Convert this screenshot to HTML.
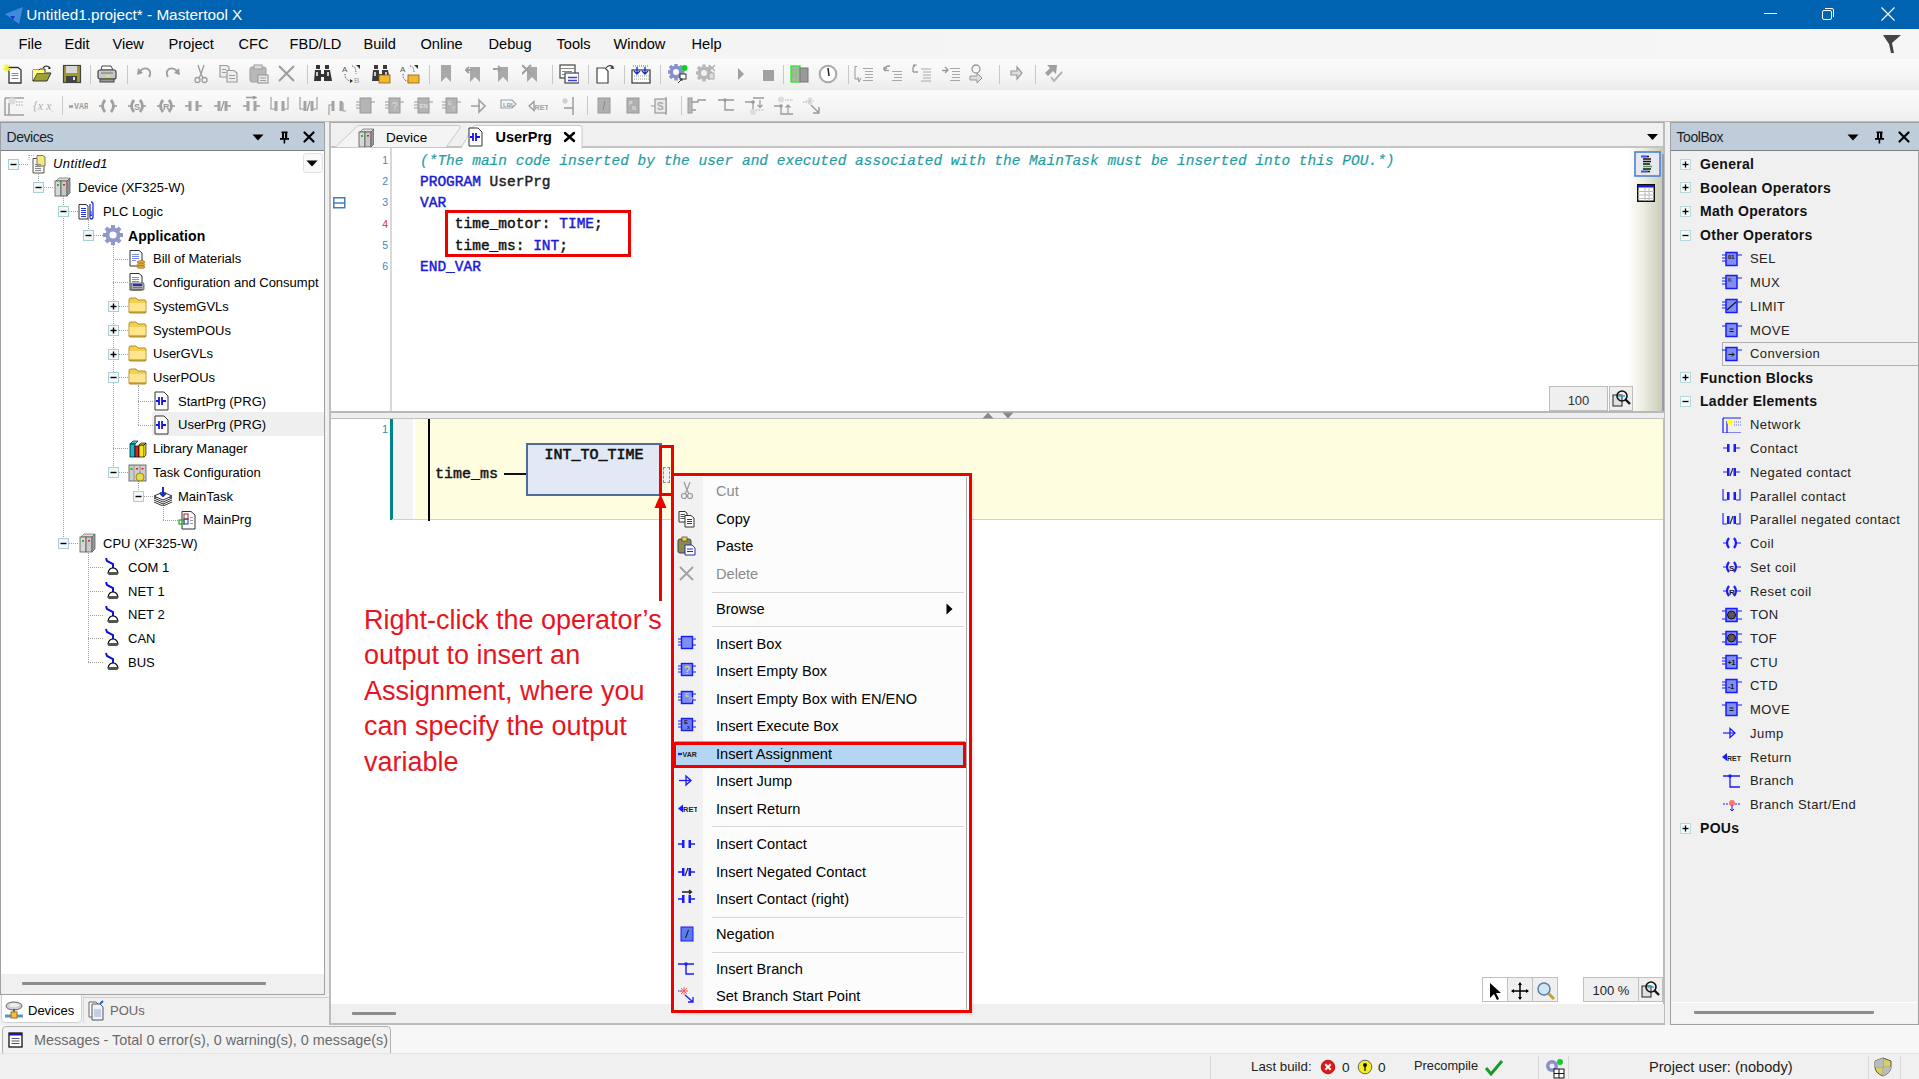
<!DOCTYPE html><html><head><meta charset="utf-8"><style>
*{margin:0;padding:0;box-sizing:border-box}
html,body{width:1919px;height:1079px;overflow:hidden;background:#f0f0f0;font-family:"Liberation Sans",sans-serif}
div{position:absolute}
.t{white-space:pre;line-height:1}
.mono{font-family:"Liberation Mono",monospace;white-space:pre;line-height:1}
</style></head><body><div style="left:0px;top:0px;width:1919px;height:29px;background:#0063b1"></div><svg style="position:absolute;left:2px;top:3px;" width="22" height="22" viewBox="0 0 22 22"><path d="M3 11 L21 4 L17 21 Z" fill="#4a90e2" opacity=".85"/><path d="M8 13 L13 13 L11 17 Z" fill="#1040c0"/></svg><div class="t" style="left:26.3px;top:6.8px;font-size:15.3px;color:#fff">Untitled1.project* - Mastertool X</div><div style="left:1764px;top:13px;width:13px;height:1px;background:#fff"></div><svg style="position:absolute;left:1820px;top:6px;" width="16" height="16" viewBox="0 0 16 16"><rect x="2.5" y="4.5" width="9" height="9" rx="1.5" fill="none" stroke="#fff"/><path d="M5 2.5 H12 a1.5 1.5 0 0 1 1.5 1.5 V11" fill="none" stroke="#fff"/></svg><svg style="position:absolute;left:1880px;top:6px;" width="16" height="16" viewBox="0 0 16 16"><path d="M1.5 1.5 L14.5 14.5 M14.5 1.5 L1.5 14.5" stroke="#fff" stroke-width="1.2"/></svg><div style="left:0px;top:29px;width:1919px;height:30px;background:linear-gradient(90deg,#f0f0f0,#f4f4f4 35%,#f6f6f6);border-top:1px solid #fdfdfd"></div><div class="t" style="left:18.5px;top:36.6px;font-size:14.6px;color:#000">File</div><div class="t" style="left:64.5px;top:36.6px;font-size:14.6px;color:#000">Edit</div><div class="t" style="left:112.5px;top:36.6px;font-size:14.6px;color:#000">View</div><div class="t" style="left:168.5px;top:36.6px;font-size:14.6px;color:#000">Project</div><div class="t" style="left:238.5px;top:36.6px;font-size:14.6px;color:#000">CFC</div><div class="t" style="left:289.5px;top:36.6px;font-size:14.6px;color:#000">FBD/LD</div><div class="t" style="left:363.5px;top:36.6px;font-size:14.6px;color:#000">Build</div><div class="t" style="left:420.5px;top:36.6px;font-size:14.6px;color:#000">Online</div><div class="t" style="left:488.5px;top:36.6px;font-size:14.6px;color:#000">Debug</div><div class="t" style="left:556.5px;top:36.6px;font-size:14.6px;color:#000">Tools</div><div class="t" style="left:613.5px;top:36.6px;font-size:14.6px;color:#000">Window</div><div class="t" style="left:691.5px;top:36.6px;font-size:14.6px;color:#000">Help</div><svg style="position:absolute;left:1882px;top:34px;" width="20" height="20" viewBox="0 0 20 20"><path d="M1 1 L19 1 L10 9 L12 19 L9 19 L7 10 Z" fill="#444"/></svg><div style="left:0px;top:59px;width:1919px;height:31px;background:linear-gradient(#fbfbfb,#f5f5f5 55%,#ececec)"></div><div style="left:0px;top:90px;width:1919px;height:31px;background:linear-gradient(#fbfbfb,#f5f5f5 55%,#eeeeee)"></div><div style="left:0px;top:121px;width:1919px;height:1px;background:#bdbdbd"></div><div style="left:0px;top:122px;width:325px;height:873px;background:#fff;border:1px solid #a0a0a0;border-top-color:#9a9a9a"></div><div style="left:1px;top:123px;width:323px;height:28px;background:#bfcddb;border-bottom:1px solid #7c8086"></div><div class="t" style="left:6.5px;top:130.2px;font-size:14px;letter-spacing:-.45px;color:#1e1e1e">Devices</div><svg style="position:absolute;left:252px;top:134px;" width="12" height="7" viewBox="0 0 12 7"><path d="M0.5 0.5 L11.5 0.5 L6 6.5 Z" fill="#000"/></svg><svg style="position:absolute;left:279px;top:131px;" width="11" height="13" viewBox="0 0 11 13"><rect x="2.5" y="0.5" width="6" height="1.6" fill="#000"/><rect x="3" y="1" width="2" height="6" fill="#000"/><rect x="6" y="1" width="2.2" height="6" fill="#000"/><rect x="1" y="7" width="9" height="1.8" fill="#000"/><rect x="4.6" y="8.5" width="1.6" height="4" fill="#000"/></svg><svg style="position:absolute;left:303px;top:131px;" width="12" height="12" viewBox="0 0 12 12"><path d="M1.5 1.5 L10.5 10.5 M10.5 1.5 L1.5 10.5" stroke="#000" stroke-width="2.2" stroke-linecap="round"/></svg><div style="left:1px;top:974px;width:323px;height:20px;background:#f0f0f0"></div><div style="left:22px;top:982px;width:244px;height:3px;background:#8c8c8c;border-radius:1px"></div><div style="left:303px;top:153px;width:20px;height:20px;background:#fafafa;border:1px solid #e2e2e2;border-radius:3px"></div><svg style="position:absolute;left:306px;top:160px;" width="12" height="7" viewBox="0 0 12 7"><path d="M0.5 0.5 L11.5 0.5 L6 6.5 Z" fill="#000"/></svg><div style="left:152px;top:412px;width:172px;height:24px;background:#efefef"></div><div style="left:38px;top:172px;width:1px;height:15px;border-left:1px dotted #a0a0a0"></div><div style="left:19px;top:164px;width:9px;height:1px;border-top:1px dotted #a0a0a0"></div><div style="left:44px;top:187px;width:9px;height:1px;border-top:1px dotted #a0a0a0"></div><div style="left:63px;top:195px;width:1px;height:348px;border-left:1px dotted #a0a0a0"></div><div style="left:69px;top:211px;width:9px;height:1px;border-top:1px dotted #a0a0a0"></div><div style="left:88px;top:219px;width:1px;height:16px;border-left:1px dotted #a0a0a0"></div><div style="left:94px;top:235px;width:9px;height:1px;border-top:1px dotted #a0a0a0"></div><div style="left:113px;top:243px;width:1px;height:229px;border-left:1px dotted #a0a0a0"></div><div style="left:113px;top:259px;width:15px;height:1px;border-top:1px dotted #a0a0a0"></div><div style="left:113px;top:282px;width:15px;height:1px;border-top:1px dotted #a0a0a0"></div><div style="left:119px;top:306px;width:9px;height:1px;border-top:1px dotted #a0a0a0"></div><div style="left:119px;top:330px;width:9px;height:1px;border-top:1px dotted #a0a0a0"></div><div style="left:119px;top:354px;width:9px;height:1px;border-top:1px dotted #a0a0a0"></div><div style="left:119px;top:377px;width:9px;height:1px;border-top:1px dotted #a0a0a0"></div><div style="left:138px;top:385px;width:1px;height:40px;border-left:1px dotted #a0a0a0"></div><div style="left:138px;top:401px;width:15px;height:1px;border-top:1px dotted #a0a0a0"></div><div style="left:138px;top:425px;width:15px;height:1px;border-top:1px dotted #a0a0a0"></div><div style="left:113px;top:448px;width:15px;height:1px;border-top:1px dotted #a0a0a0"></div><div style="left:119px;top:472px;width:9px;height:1px;border-top:1px dotted #a0a0a0"></div><div style="left:138px;top:480px;width:1px;height:16px;border-left:1px dotted #a0a0a0"></div><div style="left:144px;top:496px;width:9px;height:1px;border-top:1px dotted #a0a0a0"></div><div style="left:163px;top:504px;width:1px;height:16px;border-left:1px dotted #a0a0a0"></div><div style="left:163px;top:520px;width:15px;height:1px;border-top:1px dotted #a0a0a0"></div><div style="left:69px;top:543px;width:9px;height:1px;border-top:1px dotted #a0a0a0"></div><div style="left:88px;top:551px;width:1px;height:111px;border-left:1px dotted #a0a0a0"></div><div style="left:88px;top:567px;width:15px;height:1px;border-top:1px dotted #a0a0a0"></div><div style="left:88px;top:591px;width:15px;height:1px;border-top:1px dotted #a0a0a0"></div><div style="left:88px;top:615px;width:15px;height:1px;border-top:1px dotted #a0a0a0"></div><div style="left:88px;top:638px;width:15px;height:1px;border-top:1px dotted #a0a0a0"></div><div style="left:88px;top:662px;width:15px;height:1px;border-top:1px dotted #a0a0a0"></div><svg style="position:absolute;left:8px;top:159px;" width="11" height="11" viewBox="0 0 11 11"><rect x=".5" y=".5" width="10" height="10" fill="#f4f7f8" stroke="#a9cfd4"/><path d="M2.5 5.5 H8.5" stroke="#000" stroke-width="1.4"/></svg><svg style="position:absolute;left:28px;top:154px;" width="20" height="20" viewBox="0 0 20 20"><path d="M5 4.5 H13 L16 7 V19 H5 Z" fill="#f8f8f0" stroke="#555"/><path d="M9 1.5 H15 L17 3 V12 H9 Z" fill="#f7e87a" stroke="#777"/><path d="M1 1.5 H6 M1 1 V6" stroke="#999" stroke-dasharray="1 1"/><path d="M7 10.5 H13 M7 12.5 H13 M7 14.5 H13 M7 16.5 H13" stroke="#888"/></svg><div class="t" style="left:53px;top:157.434px;font-size:13px;color:#000;font-style:italic;letter-spacing:.4px">Untitled1</div><svg style="position:absolute;left:33px;top:182px;" width="11" height="11" viewBox="0 0 11 11"><rect x=".5" y=".5" width="10" height="10" fill="#f4f7f8" stroke="#a9cfd4"/><path d="M2.5 5.5 H8.5" stroke="#000" stroke-width="1.4"/></svg><svg style="position:absolute;left:53px;top:177px;" width="20" height="20" viewBox="0 0 20 20"><path d="M3 4 L6 1 H17 L14 4 Z" fill="#ddd" stroke="#666" stroke-width=".7"/><rect x="2" y="4" width="6" height="15" fill="#d8d8d8" stroke="#555" stroke-width=".8"/><rect x="8" y="4" width="6" height="15" fill="#c8c8c8" stroke="#555" stroke-width=".8"/><path d="M14 4 L17 1 V16 L14 19 Z" fill="#999" stroke="#555" stroke-width=".7"/><rect x="4" y="7" width="2" height="2" fill="#1c1"/><rect x="10" y="7" width="2" height="1.5" fill="#d22"/></svg><div class="t" style="left:78px;top:181.164px;font-size:13px;color:#000;">Device (XF325-W)</div><svg style="position:absolute;left:58px;top:206px;" width="11" height="11" viewBox="0 0 11 11"><rect x=".5" y=".5" width="10" height="10" fill="#f4f7f8" stroke="#a9cfd4"/><path d="M2.5 5.5 H8.5" stroke="#000" stroke-width="1.4"/></svg><svg style="position:absolute;left:78px;top:201px;" width="20" height="20" viewBox="0 0 20 20"><path d="M1 3.5 H8 L10 5 V18 H1 Z" fill="#fff" stroke="#333"/><path d="M3 7.5 H8 M3 9.5 H8 M3 11.5 H8 M3 13.5 H8 M3 15.5 H8" stroke="#2233dd"/><path d="M13 1 C15 1 15 2 15 3 V16 C15 17 14 18 13 18 C12 18 12 17 12 16 V3" fill="none" stroke="#2233dd" stroke-width="1.3"/><path d="M13 10 V15 M11.5 13.5 L13 15 L14.5 13.5" stroke="#2233dd" fill="none"/></svg><div class="t" style="left:103px;top:204.894px;font-size:13px;color:#000;">PLC Logic</div><svg style="position:absolute;left:83px;top:230px;" width="11" height="11" viewBox="0 0 11 11"><rect x=".5" y=".5" width="10" height="10" fill="#f4f7f8" stroke="#a9cfd4"/><path d="M2.5 5.5 H8.5" stroke="#000" stroke-width="1.4"/></svg><svg style="position:absolute;left:103px;top:225px;" width="20" height="20" viewBox="0 0 20 20"><g transform="translate(10 10)"><circle r="7.5" fill="#9098cc"/><circle r="3.6" fill="#fff"/><rect x="-2" y="-10" width="4" height="4" fill="#9098cc" transform="rotate(0)"/><rect x="-2" y="-10" width="4" height="4" fill="#9098cc" transform="rotate(45)"/><rect x="-2" y="-10" width="4" height="4" fill="#9098cc" transform="rotate(90)"/><rect x="-2" y="-10" width="4" height="4" fill="#9098cc" transform="rotate(135)"/><rect x="-2" y="-10" width="4" height="4" fill="#9098cc" transform="rotate(180)"/><rect x="-2" y="-10" width="4" height="4" fill="#9098cc" transform="rotate(225)"/><rect x="-2" y="-10" width="4" height="4" fill="#9098cc" transform="rotate(270)"/><rect x="-2" y="-10" width="4" height="4" fill="#9098cc" transform="rotate(315)"/></g></svg><div class="t" style="left:128px;top:228.624px;font-size:13px;color:#000;font-weight:bold;letter-spacing:.1px;font-size:14px">Application</div><svg style="position:absolute;left:128px;top:249px;" width="20" height="20" viewBox="0 0 20 20"><path d="M2 1.5 H11 L14 4 V17 H2 Z" fill="#fff" stroke="#333"/><path d="M4 5.5 H11 M4 7.5 H11 M4 9.5 H11 M4 11.5 H8" stroke="#7a8ae8"/><ellipse cx="13" cy="13" rx="4" ry="1.5" fill="#d9a83a" stroke="#8a6a20" stroke-width=".5"/><ellipse cx="13" cy="15.5" rx="4" ry="1.5" fill="#d9a83a" stroke="#8a6a20" stroke-width=".5"/><ellipse cx="13" cy="18" rx="4" ry="1.5" fill="#d9a83a" stroke="#8a6a20" stroke-width=".5"/></svg><div class="t" style="left:153px;top:252.354px;font-size:13px;color:#000;">Bill of Materials</div><svg style="position:absolute;left:128px;top:272px;" width="20" height="20" viewBox="0 0 20 20"><path d="M2 1.5 H11 L14 4 V18 H2 Z" fill="#fff" stroke="#333"/><path d="M4 5.5 H11 M4 7.5 H11 M4 9.5 H11" stroke="#7a8ae8"/><rect x="3" y="11" width="13" height="7" rx="1" fill="#aaa" stroke="#444" stroke-width=".7"/><rect x="5" y="12" width="9" height="2" fill="#2233aa"/><path d="M5 15.5 H14 M5 17.5 H14" stroke="#555" stroke-width=".6"/></svg><div class="t" style="left:153px;top:276.084px;font-size:13px;color:#000;">Configuration and Consumpt</div><svg style="position:absolute;left:108px;top:301px;" width="11" height="11" viewBox="0 0 11 11"><rect x=".5" y=".5" width="10" height="10" fill="#f4f7f8" stroke="#a9cfd4"/><path d="M2.5 5.5 H8.5" stroke="#000" stroke-width="1.4"/><path d="M5.5 2.5 V8.5" stroke="#000" stroke-width="1.4"/></svg><svg style="position:absolute;left:128px;top:296px;" width="20" height="20" viewBox="0 0 20 20"><path d="M1 4 Q1 2 3 2 H8 L10 4 H17 Q18 4 18 6 V16 Q18 17 17 17 H2 Q1 17 1 16 Z" fill="#f3cf52" stroke="#a8811a" stroke-width=".9"/><path d="M1.5 7 H17.5 V16 H1.5 Z" fill="#ffe68c"/><path d="M1 16 H18" stroke="#a8811a"/></svg><div class="t" style="left:153px;top:299.81399999999996px;font-size:13px;color:#000;">SystemGVLs</div><svg style="position:absolute;left:108px;top:325px;" width="11" height="11" viewBox="0 0 11 11"><rect x=".5" y=".5" width="10" height="10" fill="#f4f7f8" stroke="#a9cfd4"/><path d="M2.5 5.5 H8.5" stroke="#000" stroke-width="1.4"/><path d="M5.5 2.5 V8.5" stroke="#000" stroke-width="1.4"/></svg><svg style="position:absolute;left:128px;top:320px;" width="20" height="20" viewBox="0 0 20 20"><path d="M1 4 Q1 2 3 2 H8 L10 4 H17 Q18 4 18 6 V16 Q18 17 17 17 H2 Q1 17 1 16 Z" fill="#f3cf52" stroke="#a8811a" stroke-width=".9"/><path d="M1.5 7 H17.5 V16 H1.5 Z" fill="#ffe68c"/><path d="M1 16 H18" stroke="#a8811a"/></svg><div class="t" style="left:153px;top:323.544px;font-size:13px;color:#000;">SystemPOUs</div><svg style="position:absolute;left:108px;top:349px;" width="11" height="11" viewBox="0 0 11 11"><rect x=".5" y=".5" width="10" height="10" fill="#f4f7f8" stroke="#a9cfd4"/><path d="M2.5 5.5 H8.5" stroke="#000" stroke-width="1.4"/><path d="M5.5 2.5 V8.5" stroke="#000" stroke-width="1.4"/></svg><svg style="position:absolute;left:128px;top:344px;" width="20" height="20" viewBox="0 0 20 20"><path d="M1 4 Q1 2 3 2 H8 L10 4 H17 Q18 4 18 6 V16 Q18 17 17 17 H2 Q1 17 1 16 Z" fill="#f3cf52" stroke="#a8811a" stroke-width=".9"/><path d="M1.5 7 H17.5 V16 H1.5 Z" fill="#ffe68c"/><path d="M1 16 H18" stroke="#a8811a"/></svg><div class="t" style="left:153px;top:347.27399999999994px;font-size:13px;color:#000;">UserGVLs</div><svg style="position:absolute;left:108px;top:372px;" width="11" height="11" viewBox="0 0 11 11"><rect x=".5" y=".5" width="10" height="10" fill="#f4f7f8" stroke="#a9cfd4"/><path d="M2.5 5.5 H8.5" stroke="#000" stroke-width="1.4"/></svg><svg style="position:absolute;left:128px;top:367px;" width="20" height="20" viewBox="0 0 20 20"><path d="M1 4 Q1 2 3 2 H8 L10 4 H17 Q18 4 18 6 V16 Q18 17 17 17 H2 Q1 17 1 16 Z" fill="#f3cf52" stroke="#a8811a" stroke-width=".9"/><path d="M1.5 7 H17.5 V16 H1.5 Z" fill="#ffe68c"/><path d="M1 16 H18" stroke="#a8811a"/></svg><div class="t" style="left:153px;top:371.00399999999996px;font-size:13px;color:#000;">UserPOUs</div><svg style="position:absolute;left:153px;top:391px;" width="20" height="20" viewBox="0 0 20 20"><path d="M2 1 H11 L15 5 V19 H2 Z" fill="#fff" stroke="#333"/><path d="M3 10 H6 M6 6 V14 M9 6 V14 M9 10 H13" stroke="#1515ee" stroke-width="1.8"/></svg><div class="t" style="left:178px;top:394.734px;font-size:13px;color:#000;">StartPrg (PRG)</div><svg style="position:absolute;left:153px;top:415px;" width="20" height="20" viewBox="0 0 20 20"><path d="M2 1 H11 L15 5 V19 H2 Z" fill="#fff" stroke="#333"/><path d="M3 10 H6 M6 6 V14 M9 6 V14 M9 10 H13" stroke="#1515ee" stroke-width="1.8"/></svg><div class="t" style="left:178px;top:418.464px;font-size:13px;color:#000;">UserPrg (PRG)</div><svg style="position:absolute;left:128px;top:438px;" width="20" height="20" viewBox="0 0 20 20"><path d="M2 6 L5 3 H10 L7 6 Z" fill="#2ad4e8" stroke="#000" stroke-width=".6"/><rect x="2" y="6" width="5" height="13" fill="#18b7cc" stroke="#000" stroke-width=".7"/><rect x="7" y="8" width="4" height="11" fill="#e02020" stroke="#000" stroke-width=".7"/><rect x="11" y="7" width="5" height="12" fill="#f4e424" stroke="#000" stroke-width=".7"/><path d="M11 7 L13 5 H18 L16 7 Z M16 7 L18 5 V17 L16 19" fill="#d8c818" stroke="#000" stroke-width=".6"/></svg><div class="t" style="left:153px;top:442.19399999999996px;font-size:13px;color:#000;">Library Manager</div><svg style="position:absolute;left:108px;top:467px;" width="11" height="11" viewBox="0 0 11 11"><rect x=".5" y=".5" width="10" height="10" fill="#f4f7f8" stroke="#a9cfd4"/><path d="M2.5 5.5 H8.5" stroke="#000" stroke-width="1.4"/></svg><svg style="position:absolute;left:128px;top:462px;" width="20" height="20" viewBox="0 0 20 20"><rect x="1" y="3" width="17" height="16" fill="#ccc" stroke="#555" stroke-width=".8"/><path d="M6 3 V19 M12 3 V19" stroke="#777" stroke-width=".6"/><rect x="2.5" y="6" width="2" height="2" fill="#1c1"/><rect x="8" y="6" width="2" height="1.5" fill="#d22"/><rect x="13.5" y="6" width="2" height="1.5" fill="#d22"/><g transform="translate(12 15)"><circle r="4" fill="#f2e020" stroke="#665500" stroke-width=".6"/><circle r="1.5" fill="#ccc"/></g></svg><div class="t" style="left:153px;top:465.924px;font-size:13px;color:#000;">Task Configuration</div><svg style="position:absolute;left:133px;top:491px;" width="11" height="11" viewBox="0 0 11 11"><rect x=".5" y=".5" width="10" height="10" fill="#f4f7f8" stroke="#a9cfd4"/><path d="M2.5 5.5 H8.5" stroke="#000" stroke-width="1.4"/></svg><svg style="position:absolute;left:153px;top:486px;" width="20" height="20" viewBox="0 0 20 20"><path d="M1 12 L10 8 L19 12 L10 16 Z" fill="#fff" stroke="#333"/><path d="M1 14 L10 18 L19 14" fill="none" stroke="#333"/><path d="M1 16 L10 20 L19 16" fill="none" stroke="#333"/><path d="M1 10 L10 6 L19 10 L10 14 Z" fill="#fff" stroke="#333"/><path d="M10 1 V10 M7 7 L10 10 L13 7" stroke="#1530c0" stroke-width="2" fill="none"/></svg><div class="t" style="left:178px;top:489.654px;font-size:13px;color:#000;">MainTask</div><svg style="position:absolute;left:178px;top:510px;" width="20" height="20" viewBox="0 0 20 20"><path d="M4 1.5 H13 L17 5 V19 H4 Z" fill="#fff" stroke="#333"/><rect x="6" y="4" width="4" height="5" fill="none" stroke="#c03030" stroke-width="1.1"/><rect x="6" y="9" width="4" height="5" fill="none" stroke="#3040c0" stroke-width="1.1"/><rect x="1" y="10" width="5" height="4" fill="none" stroke="#20a020" stroke-width="1.2"/><path d="M12 7.5 H15 M12 10.5 H15 M12 13.5 H15" stroke="#999"/></svg><div class="t" style="left:203px;top:513.384px;font-size:13px;color:#000;">MainPrg</div><svg style="position:absolute;left:58px;top:538px;" width="11" height="11" viewBox="0 0 11 11"><rect x=".5" y=".5" width="10" height="10" fill="#f4f7f8" stroke="#a9cfd4"/><path d="M2.5 5.5 H8.5" stroke="#000" stroke-width="1.4"/></svg><svg style="position:absolute;left:78px;top:533px;" width="20" height="20" viewBox="0 0 20 20"><path d="M3 4 L6 1 H17 L14 4 Z" fill="#ddd" stroke="#666" stroke-width=".7"/><rect x="2" y="4" width="6" height="15" fill="#d8d8d8" stroke="#555" stroke-width=".8"/><rect x="8" y="4" width="6" height="15" fill="#c8c8c8" stroke="#555" stroke-width=".8"/><path d="M14 4 L17 1 V16 L14 19 Z" fill="#999" stroke="#555" stroke-width=".7"/><rect x="4" y="7" width="2" height="2" fill="#1c1"/><rect x="10" y="7" width="2" height="1.5" fill="#d22"/></svg><div class="t" style="left:103px;top:537.114px;font-size:13px;color:#000;">CPU (XF325-W)</div><svg style="position:absolute;left:103px;top:557px;" width="20" height="20" viewBox="0 0 20 20"><path d="M3 1 L4 4 L10 7 L10 11" stroke="#1010e0" stroke-width="2" fill="none"/><path d="M5 16 Q6 11 10 11 Q14 11 15 16 Z" fill="#fff" stroke="#000" stroke-width="1.2"/><rect x="5" y="15" width="10" height="3" rx="1" fill="#555"/></svg><div class="t" style="left:128px;top:560.844px;font-size:13px;color:#000;">COM 1</div><svg style="position:absolute;left:103px;top:581px;" width="20" height="20" viewBox="0 0 20 20"><path d="M3 1 L4 4 L10 7 L10 11" stroke="#1010e0" stroke-width="2" fill="none"/><path d="M5 16 Q6 11 10 11 Q14 11 15 16 Z" fill="#fff" stroke="#000" stroke-width="1.2"/><rect x="5" y="15" width="10" height="3" rx="1" fill="#555"/></svg><div class="t" style="left:128px;top:584.574px;font-size:13px;color:#000;">NET 1</div><svg style="position:absolute;left:103px;top:605px;" width="20" height="20" viewBox="0 0 20 20"><path d="M3 1 L4 4 L10 7 L10 11" stroke="#1010e0" stroke-width="2" fill="none"/><path d="M5 16 Q6 11 10 11 Q14 11 15 16 Z" fill="#fff" stroke="#000" stroke-width="1.2"/><rect x="5" y="15" width="10" height="3" rx="1" fill="#555"/></svg><div class="t" style="left:128px;top:608.304px;font-size:13px;color:#000;">NET 2</div><svg style="position:absolute;left:103px;top:628px;" width="20" height="20" viewBox="0 0 20 20"><path d="M3 1 L4 4 L10 7 L10 11" stroke="#1010e0" stroke-width="2" fill="none"/><path d="M5 16 Q6 11 10 11 Q14 11 15 16 Z" fill="#fff" stroke="#000" stroke-width="1.2"/><rect x="5" y="15" width="10" height="3" rx="1" fill="#555"/></svg><div class="t" style="left:128px;top:632.034px;font-size:13px;color:#000;">CAN</div><svg style="position:absolute;left:103px;top:652px;" width="20" height="20" viewBox="0 0 20 20"><path d="M3 1 L4 4 L10 7 L10 11" stroke="#1010e0" stroke-width="2" fill="none"/><path d="M5 16 Q6 11 10 11 Q14 11 15 16 Z" fill="#fff" stroke="#000" stroke-width="1.2"/><rect x="5" y="15" width="10" height="3" rx="1" fill="#555"/></svg><div class="t" style="left:128px;top:655.764px;font-size:13px;color:#000;">BUS</div><div style="left:324px;top:151px;width:1px;height:823px;background:#a0a0a0"></div><div style="left:0px;top:995px;width:330px;height:30px;background:#f0f0f0"></div><div style="left:83px;top:997px;width:247px;height:1px;background:#d0d0d0"></div><div style="left:1px;top:995px;width:81px;height:28px;background:#fff;border:1px solid #d0d0d0;border-top:none;border-radius:0 0 5px 5px"></div><svg style="position:absolute;left:4px;top:1000px;" width="20" height="20" viewBox="0 0 20 20"><ellipse cx="10" cy="6" rx="8" ry="4" fill="#cfcfcf" stroke="#666"/><ellipse cx="10" cy="5" rx="5" ry="2" fill="#eee"/><path d="M10 9 V14" stroke="#444" stroke-width="1.5"/><path d="M1 16 H19" stroke="#5599cc" stroke-width="3"/><rect x="7" y="12" width="6" height="6" fill="#f2c040" stroke="#a07010"/></svg><div class="t" style="left:28px;top:1004px;font-size:13px;color:#000">Devices</div><div style="left:83px;top:996px;width:1px;height:27px;background:#d8d8d8"></div><svg style="position:absolute;left:86px;top:999px;" width="20" height="22" viewBox="0 0 20 22"><path d="M3 3 H10 L13 6 V18 H3 Z" fill="#fff" stroke="#666"/><path d="M6 5 H14 L17 8 V21 H6 Z" fill="#eef4ff" stroke="#555"/><path d="M14 5 L17 2" stroke="#2266cc" stroke-width="2"/><path d="M8 11 H15 M8 13 H15 M8 15 H15 M8 17 H15" stroke="#9ac"/></svg><div class="t" style="left:110px;top:1004px;font-size:13px;color:#666">POUs</div><div style="left:329px;top:122px;width:1336px;height:903px;background:#fff;border:2px solid #bcbcbc;border-top:1px solid #a8a8a8"></div><div style="left:331px;top:123px;width:1332px;height:24px;background:#f0f0f0"></div><div style="left:331px;top:146px;width:1332px;height:2px;background:#c4c4c4"></div><svg style="position:absolute;left:1647px;top:134px;" width="11" height="6" viewBox="0 0 11 6"><path d="M0 0 H11 L5.5 6 Z" fill="#000"/></svg><svg style="position:absolute;left:334px;top:124px;" width="130" height="24" viewBox="0 0 130 24"><path d="M1 23.5 L24 1.5 H124 Q127 1.5 126 4 L112 23.5 Z" fill="#f4f4f4" stroke="#c8c8c8"/></svg><svg style="position:absolute;left:357px;top:128px;" width="17" height="19" viewBox="0 0 17 19"><path d="M3 4 L6 1 H17 L14 4 Z" fill="#ddd" stroke="#666" stroke-width=".7"/><rect x="2" y="4" width="6" height="15" fill="#d8d8d8" stroke="#555" stroke-width=".8"/><rect x="8" y="4" width="6" height="15" fill="#c8c8c8" stroke="#555" stroke-width=".8"/><path d="M14 4 L17 1 V16 L14 19 Z" fill="#999" stroke="#555" stroke-width=".7"/><rect x="4" y="7" width="2" height="2" fill="#1c1"/><rect x="10" y="7" width="2" height="1.5" fill="#d22"/></svg><div class="t" style="left:386px;top:131px;font-size:13.5px;color:#000">Device</div><svg style="position:absolute;left:460px;top:124px;" width="124" height="25" viewBox="0 0 124 25"><path d="M1 24 L13 3 Q14 1.5 16 1.5 H119 Q122 1.5 122 4 V24 Z" fill="#fff" stroke="#c8c8c8"/><path d="M2 24 H121" stroke="#fff" stroke-width="2"/></svg><svg style="position:absolute;left:467px;top:127px;" width="19" height="20" viewBox="0 0 19 20"><path d="M2 1 H11 L15 5 V19 H2 Z" fill="#fff" stroke="#333"/><path d="M3 10 H6 M6 6 V14 M9 6 V14 M9 10 H13" stroke="#1515ee" stroke-width="1.8"/></svg><div class="t" style="left:495.5px;top:130px;font-size:14.5px;font-weight:bold;color:#000">UserPrg</div><svg style="position:absolute;left:563px;top:131px;" width="13" height="12" viewBox="0 0 13 12"><path d="M2 2 L11 10 M11 2 L2 10" stroke="#000" stroke-width="2.4" stroke-linecap="round"/></svg><div style="left:390px;top:148px;width:2px;height:263px;background:#d8d8d8"></div><div class="t" style="left:370px;top:155.1px;font-size:10.5px;color:#3f86bd;width:18px;text-align:right">1</div><div class="t" style="left:370px;top:176.25px;font-size:10.5px;color:#3f86bd;width:18px;text-align:right">2</div><div class="t" style="left:370px;top:197.39999999999998px;font-size:10.5px;color:#3f86bd;width:18px;text-align:right">3</div><div class="t" style="left:370px;top:218.54999999999998px;font-size:10.5px;color:#cc3333;width:18px;text-align:right">4</div><div class="t" style="left:370px;top:239.7px;font-size:10.5px;color:#3f86bd;width:18px;text-align:right">5</div><div class="t" style="left:370px;top:260.85px;font-size:10.5px;color:#3f86bd;width:18px;text-align:right">6</div><svg style="position:absolute;left:333px;top:197px;" width="13" height="12" viewBox="0 0 13 12"><rect x=".75" y=".75" width="11" height="10" fill="none" stroke="#3f7fc0" stroke-width="1.5"/><path d="M1 6 H12" stroke="#3f7fc0" stroke-width="1.5"/></svg><div class="mono" style="left:420px;top:153.9px;font-size:14.5px;-webkit-text-stroke:.45px"><span style="color:#1e9ea3;font-style:italic;-webkit-text-stroke:.2px">(*The main code inserted by the user and executed associated with the MainTask must be inserted into this POU.*)</span></div><div class="mono" style="left:420px;top:175.1px;font-size:14.5px;-webkit-text-stroke:.45px"><span style="color:#1a1ad8">PROGRAM</span><span style="color:#222"> UserPrg</span></div><div class="mono" style="left:420px;top:196.2px;font-size:14.5px;-webkit-text-stroke:.45px"><span style="color:#1a1ad8">VAR</span></div><div class="mono" style="left:420px;top:217.3px;font-size:14.5px;-webkit-text-stroke:.45px"><span style="color:#111">    time_motor: </span><span style="color:#1a1ad8">TIME</span><span style="color:#111">;</span></div><div class="mono" style="left:420px;top:238.5px;font-size:14.5px;-webkit-text-stroke:.45px"><span style="color:#111">    time_ms: </span><span style="color:#1a1ad8">INT</span><span style="color:#111">;</span></div><div class="mono" style="left:420px;top:259.7px;font-size:14.5px;-webkit-text-stroke:.45px"><span style="color:#1a1ad8">END_VAR</span></div><div style="left:445px;top:210px;width:186px;height:47px;border:3px solid #ee0000"></div><div style="left:1628px;top:148px;width:35px;height:263px;background:linear-gradient(90deg,#ffffff,#ecece0 45%,#c9cab4)"></div><div style="left:1662px;top:154px;width:2px;height:257px;background:#9a9aa8"></div><svg style="position:absolute;left:1634px;top:151px;" width="27" height="26" viewBox="0 0 27 26"><rect x="1" y="1" width="25" height="24" fill="#e6e8f0" stroke="#4a80d4" stroke-width="1.6"/><path d="M7 5.5 H15 M9 8 H17 M9 10.5 H17 M9 13 H16 M9 18 H17 M7 20.5 H16" stroke="#111" stroke-width="1.3"/><path d="M7 5.5 H13 M7 20.5 H14" stroke="#4a4aff" stroke-width="1.4"/><path d="M9 15.5 H18" stroke="#4aaa55" stroke-width="1.6"/></svg><svg style="position:absolute;left:1637px;top:184px;" width="18" height="18" viewBox="0 0 18 18"><rect x=".75" y=".75" width="16.5" height="16.5" fill="#fff" stroke="#111" stroke-width="1.5"/><rect x="1" y="1" width="16" height="2.5" fill="#1515ee"/><path d="M1 7.5 H17 M1 11 H17 M1 14.5 H17 M8 3.5 V17 M12 3.5 V17" stroke="#bbb"/></svg><div style="left:1549px;top:386px;width:59px;height:25px;background:#efefef;border:1px solid #bdbdbd"></div><div class="t" style="left:1549px;top:394px;font-size:13px;color:#333;width:59px;text-align:center">100</div><div style="left:1609px;top:386px;width:24px;height:25px;background:#efefef;border:1px solid #bdbdbd"></div><svg style="position:absolute;left:1610px;top:388px;" width="22" height="21" viewBox="0 0 22 21"><rect x="3" y="7" width="9" height="11" fill="#e0e0e0" stroke="#222"/><circle cx="12" cy="8" r="5" fill="none" stroke="#111" stroke-width="1.6"/><path d="M8.5 8 H15" stroke="#2ac" stroke-width="1.5"/><path d="M15.5 11.5 L20 16" stroke="#111" stroke-width="2.4"/></svg><div style="left:331px;top:411px;width:1333px;height:8px;background:#eeeeee;border-top:2px solid #b8b8b8;border-bottom:1px solid #c0c0c0"></div><svg style="position:absolute;left:982px;top:412px;" width="32" height="7" viewBox="0 0 32 7"><path d="M0.5 6.5 L6 0.5 L11.5 6.5 Z" fill="#8a8a8a"/><path d="M20.5 0.5 H31.5 L26 6.5 Z" fill="#8a8a8a"/></svg><div style="left:390px;top:419px;width:3px;height:101px;background:#00838a"></div><div style="left:393px;top:419px;width:20px;height:100px;background:#f3f3f3"></div><div style="left:413px;top:419px;width:2px;height:100px;background:#fff"></div><div style="left:415px;top:419px;width:1248px;height:100px;background:#fffde0"></div><div style="left:392px;top:519px;width:1271px;height:1px;background:#d0d0d0"></div><div class="t" style="left:376px;top:424px;font-size:11px;color:#2a8fb0;width:12px;text-align:right">1</div><div style="left:428px;top:419px;width:2px;height:102px;background:#000"></div><div class="mono" style="left:435px;top:467px;font-size:15px;-webkit-text-stroke:.45px;color:#111">time_ms</div><div style="left:504px;top:473px;width:23px;height:2px;background:#111"></div><div style="left:526px;top:443px;width:136px;height:53px;background:#e2e8f4;border:2px solid #506c9c"></div><div class="mono" style="left:526px;top:447.5px;width:136px;text-align:center;font-size:15px;-webkit-text-stroke:.6px;color:#111">INT_TO_TIME</div><div style="left:663px;top:467px;width:7px;height:16px;border:1px dashed #888;background:#f4f0f4"></div><div style="left:659px;top:445px;width:15px;height:51px;border:3px solid #ee0000"></div><div style="left:659px;top:500px;width:3px;height:101px;background:#ee0000"></div><svg style="position:absolute;left:654px;top:494px;" width="13" height="14" viewBox="0 0 13 14"><path d="M6.5 0 L12.5 14 H0.5 Z" fill="#ee0000"/></svg><div class="t" style="left:364px;top:606.5px;font-size:27px;color:#e8141e">Right-click the operator’s</div><div class="t" style="left:364px;top:642.1px;font-size:27px;color:#e8141e">output to insert an</div><div class="t" style="left:364px;top:677.7px;font-size:27px;color:#e8141e">Assignment, where you</div><div class="t" style="left:364px;top:713.3px;font-size:27px;color:#e8141e">can specify the output</div><div class="t" style="left:364px;top:748.9px;font-size:27px;color:#e8141e">variable</div><div style="left:1482px;top:977px;width:76px;height:25px;background:#fff"></div><div style="left:1482px;top:977px;width:26px;height:25px;border:1px solid #c0c0c0;background:#fff"></div><div style="left:1507px;top:977px;width:26px;height:25px;border:1px solid #c0c0c0;background:#efefef"></div><div style="left:1532px;top:977px;width:26px;height:25px;border:1px solid #c0c0c0;background:#efefef"></div><svg style="position:absolute;left:1486px;top:981px;" width="18" height="20" viewBox="0 0 18 20"><path d="M4 2 L4 17 L8 13 L11 19 L13 18 L10 12 L15 12 Z" fill="#000"/></svg><svg style="position:absolute;left:1511px;top:981px;" width="18" height="20" viewBox="0 0 18 20"><path d="M9 2 V18 M1 10 H17" stroke="#000" stroke-width="1.5"/><path d="M9 1 L7 4 H11 Z M9 19 L7 16 H11 Z M0 10 L3 8 V12 Z M18 10 L15 8 V12 Z" fill="#000"/></svg><svg style="position:absolute;left:1536px;top:981px;" width="20" height="20" viewBox="0 0 20 20"><circle cx="8" cy="8" r="6" fill="#cfe6f8" stroke="#5a7fa0" stroke-width="1.5"/><path d="M12.5 12.5 L18 18" stroke="#c9a040" stroke-width="3"/></svg><div style="left:1583px;top:977px;width:56px;height:25px;background:#efefef;border:1px solid #c0c0c0"></div><div class="t" style="left:1583px;top:984px;font-size:13px;color:#222;width:56px;text-align:center">100 %</div><div style="left:1638px;top:977px;width:25px;height:25px;background:#efefef;border:1px solid #c0c0c0"></div><svg style="position:absolute;left:1639px;top:979px;" width="22" height="21" viewBox="0 0 22 21"><rect x="3" y="7" width="9" height="11" fill="#e0e0e0" stroke="#222"/><circle cx="12" cy="8" r="5" fill="none" stroke="#111" stroke-width="1.6"/><path d="M8.5 8 H15" stroke="#2ac" stroke-width="1.5"/><path d="M15.5 11.5 L20 16" stroke="#111" stroke-width="2.4"/></svg><div style="left:331px;top:1004px;width:1333px;height:19px;background:#f0f0f0"></div><div style="left:352px;top:1012px;width:44px;height:3px;background:#8c8c8c;border-radius:1px"></div><div style="left:676px;top:478px;width:297px;height:536px;background:rgba(0,0,0,.12);filter:blur(1.5px)"></div><div style="left:673px;top:475px;width:297px;height:536px;background:#fcfcfc;border:1px solid #a0a0a0"></div><div style="left:675px;top:477px;width:28px;height:532px;background:#f1f1f1"></div><div style="left:966px;top:477px;width:1px;height:532px;background:#a8a8a8"></div><div style="left:675px;top:741px;width:290px;height:26px;background:#b5d6f2;border:1px solid #7fb2e0"></div><svg style="position:absolute;left:677px;top:481px;" width="20" height="20" viewBox="0 0 20 20"><path d="M7 1 L10 9 M13 1 L10 9 L8 13 M10 9 L12 13" stroke="#999" stroke-width="1.2" fill="none"/><circle cx="7" cy="15" r="2.5" fill="none" stroke="#999" stroke-width="1.2"/><circle cx="13" cy="15" r="2.5" fill="none" stroke="#999" stroke-width="1.2"/></svg><div class="t" style="left:716px;top:484.2628px;font-size:14.6px;color:#8a8a8a">Cut</div><svg style="position:absolute;left:677px;top:509px;" width="20" height="20" viewBox="0 0 20 20"><path d="M2 2.5 H8 L10 4 V13 H2 Z" fill="#fff" stroke="#333"/><path d="M3.5 5.5 H8 M3.5 7.5 H8 M3.5 9.5 H8" stroke="#555"/><path d="M8 6.5 H14 L17 9 V18 H8 Z" fill="#fff" stroke="#333"/><path d="M10 10.5 H15 M10 12.5 H15 M10 14.5 H15" stroke="#2233aa"/></svg><div class="t" style="left:716px;top:511.76279999999997px;font-size:14.6px;color:#000">Copy</div><svg style="position:absolute;left:677px;top:536px;" width="20" height="20" viewBox="0 0 20 20"><rect x="1" y="3" width="13" height="14" rx="2" fill="#8a8a55" stroke="#444"/><rect x="5" y="1" width="5" height="4" fill="#f5d840" stroke="#444" stroke-width=".7"/><path d="M8 9 H15 L18 12 V19 H8 Z" fill="#fff" stroke="#2233aa"/><path d="M10 13 H16 M10 15.5 H16" stroke="#2233aa"/></svg><div class="t" style="left:716px;top:538.9628px;font-size:14.6px;color:#000">Paste</div><svg style="position:absolute;left:677px;top:564px;" width="20" height="20" viewBox="0 0 20 20"><path d="M3 3 L16 16 M16 3 L3 16" stroke="#a0a0a0" stroke-width="1.8"/></svg><div class="t" style="left:716px;top:566.6628000000001px;font-size:14.6px;color:#8a8a8a">Delete</div><div style="left:712px;top:592px;width:252px;height:2px;background:#d7d7d7;border-bottom:1px solid #fff"></div><div class="t" style="left:716px;top:601.8628px;font-size:14.6px;color:#000">Browse</div><div style="left:712px;top:626px;width:252px;height:2px;background:#d7d7d7;border-bottom:1px solid #fff"></div><svg style="position:absolute;left:677px;top:634px;" width="20" height="20" viewBox="0 0 20 20"><path d="M1 5 H5 M1 8 H5 M1 11 H5 M15 5 H19 M15 11 H19" stroke="#1a1aff" stroke-width="1.2"/><rect x="4.5" y="2.5" width="11" height="12" fill="#7b8ff5" stroke="#1a1aff" stroke-width="1.4"/></svg><div class="t" style="left:716px;top:636.7628px;font-size:14.6px;color:#000">Insert Box</div><svg style="position:absolute;left:677px;top:661px;" width="20" height="20" viewBox="0 0 20 20"><path d="M1 5 H5 M1 8 H5 M1 11 H5 M15 5 H19 M15 11 H19" stroke="#1a1aff" stroke-width="1.2"/><rect x="4.5" y="2.5" width="11" height="12" fill="#7b8ff5" stroke="#1a1aff" stroke-width="1.4"/><text x="10" y="12.5" font-size="10" text-anchor="middle" fill="#ee3" font-family="Liberation Sans">?</text></svg><div class="t" style="left:716px;top:664.3628px;font-size:14.6px;color:#000">Insert Empty Box</div><svg style="position:absolute;left:677px;top:689px;" width="20" height="20" viewBox="0 0 20 20"><path d="M1 5 H5 M1 8 H5 M1 11 H5 M15 5 H19 M15 11 H19" stroke="#1a1aff" stroke-width="1.2"/><rect x="4.5" y="2.5" width="11" height="12" fill="#7b8ff5" stroke="#1a1aff" stroke-width="1.4"/><text x="8" y="8" font-size="6" fill="#ee3" font-family="Liberation Sans">E</text><text x="12" y="13" font-size="7" fill="#ee3" font-family="Liberation Sans">?</text></svg><div class="t" style="left:716px;top:691.8628px;font-size:14.6px;color:#000">Insert Empty Box with EN/ENO</div><svg style="position:absolute;left:677px;top:716px;" width="20" height="20" viewBox="0 0 20 20"><path d="M1 5 H5 M1 8 H5 M1 11 H5 M15 5 H19 M15 11 H19" stroke="#1a1aff" stroke-width="1.2"/><rect x="4.5" y="2.5" width="11" height="12" fill="#6d7ff0" stroke="#1a1aff" stroke-width="1.4"/><text x="7" y="8" font-size="6" fill="#000" font-family="Liberation Sans">E</text><text x="10" y="13" font-size="6" fill="#000" font-family="Liberation Sans">x</text></svg><div class="t" style="left:716px;top:719.2628px;font-size:14.6px;color:#000">Insert Execute Box</div><svg style="position:absolute;left:677px;top:744px;" width="20" height="20" viewBox="0 0 20 20"><path d="M1 10 H5" stroke="#1a1aff" stroke-width="2.2"/><text x="5.5" y="12.5" font-size="7" font-weight="bold" fill="#222" font-family="Liberation Sans">VAR</text></svg><div class="t" style="left:716px;top:746.5628px;font-size:14.6px;color:#000">Insert Assignment</div><svg style="position:absolute;left:677px;top:771px;" width="20" height="20" viewBox="0 0 20 20"><path d="M2 9.5 H14" stroke="#1a1aff" stroke-width="1.3"/><path d="M9 5 L14 9.5 L9 14 Z" fill="none" stroke="#1a1aff" stroke-width="1.3"/></svg><div class="t" style="left:716px;top:774.0628px;font-size:14.6px;color:#000">Insert Jump</div><svg style="position:absolute;left:677px;top:799px;" width="20" height="20" viewBox="0 0 20 20"><path d="M1 9.5 L6 5.5 V13.5 Z" fill="#1a1aff"/><text x="6" y="13" font-size="7.5" font-weight="bold" fill="#222" font-family="Liberation Sans">RET</text></svg><div class="t" style="left:716px;top:801.5628px;font-size:14.6px;color:#000">Insert Return</div><div style="left:712px;top:826px;width:252px;height:2px;background:#d7d7d7;border-bottom:1px solid #fff"></div><svg style="position:absolute;left:677px;top:834px;" width="20" height="20" viewBox="0 0 20 20"><path d="M1 10 H5 M14 10 H18" stroke="#1a1aff" stroke-width="1.3"/><rect x="5" y="6" width="2.5" height="8" fill="#1a1aff"/><rect x="11.5" y="6" width="2.5" height="8" fill="#1a1aff"/></svg><div class="t" style="left:716px;top:837.1628000000001px;font-size:14.6px;color:#000">Insert Contact</div><svg style="position:absolute;left:677px;top:862px;" width="20" height="20" viewBox="0 0 20 20"><path d="M1 10 H5 M14 10 H18" stroke="#1a1aff" stroke-width="1.3"/><rect x="5" y="6" width="2.5" height="8" fill="#1a1aff"/><rect x="11.5" y="6" width="2.5" height="8" fill="#1a1aff"/><path d="M8 14 L11 6" stroke="#222" stroke-width="1.2"/></svg><div class="t" style="left:716px;top:864.6628000000001px;font-size:14.6px;color:#000">Insert Negated Contact</div><svg style="position:absolute;left:677px;top:889px;" width="20" height="20" viewBox="0 0 20 20"><path d="M1 10 H5 M14 10 H18" stroke="#1a1aff" stroke-width="1.3"/><rect x="5" y="6" width="2.5" height="8" fill="#1a1aff"/><rect x="11.5" y="6" width="2.5" height="8" fill="#1a1aff"/><path d="M5 3 H14 M12 1 L14.5 3 L12 5" stroke="#222" stroke-width="1.3" fill="none"/></svg><div class="t" style="left:716px;top:892.2628px;font-size:14.6px;color:#000">Insert Contact (right)</div><div style="left:712px;top:917px;width:252px;height:2px;background:#d7d7d7;border-bottom:1px solid #fff"></div><svg style="position:absolute;left:677px;top:924px;" width="20" height="20" viewBox="0 0 20 20"><rect x="4" y="3" width="12" height="14" fill="#5b7bf0" stroke="#1a1aff"/><path d="M8.5 14 L11.5 6" stroke="#111" stroke-width="1"/></svg><div class="t" style="left:716px;top:927.2628px;font-size:14.6px;color:#000">Negation</div><div style="left:712px;top:952px;width:252px;height:2px;background:#d7d7d7;border-bottom:1px solid #fff"></div><svg style="position:absolute;left:677px;top:959px;" width="20" height="20" viewBox="0 0 20 20"><path d="M1 5 H17 M9 5 V15 H17" stroke="#1a1aff" stroke-width="1.4" fill="none"/><circle cx="9" cy="5" r="1.8" fill="#1a1aff"/></svg><div class="t" style="left:716px;top:961.8628px;font-size:14.6px;color:#000">Insert Branch</div><svg style="position:absolute;left:677px;top:986px;" width="20" height="20" viewBox="0 0 20 20"><path d="M8 9 L16 16 M16 11 V16 H11" stroke="#1a1aff" stroke-width="1.3" fill="none"/><path d="M1 5 H6" stroke="#1a1aff" stroke-width="1.2" stroke-dasharray="1.5 1"/><path d="M7 1 V9 M3 5 H11 M4 2 L10 8 M10 2 L4 8" stroke="#ff5a5a" stroke-width="1"/></svg><div class="t" style="left:716px;top:989.2628px;font-size:14.6px;color:#000">Set Branch Start Point</div><svg style="position:absolute;left:946px;top:603px;" width="7" height="12" viewBox="0 0 7 12"><path d="M0.5 0.5 L6.5 6 L0.5 11.5 Z" fill="#000"/></svg><div style="left:671px;top:473px;width:301px;height:540px;border:3px solid #ee0000"></div><div style="left:673px;top:742px;width:293px;height:26px;border:3px solid #ee0000"></div><div style="left:1670px;top:122px;width:249px;height:903px;background:#f0f0f0;border:1px solid #a0a0a0"></div><div style="left:1671px;top:123px;width:248px;height:28px;background:#bfcddb;border-bottom:1px solid #7c8086"></div><div class="t" style="left:1676.5px;top:130.2px;font-size:14px;letter-spacing:-.45px;color:#1e1e1e">ToolBox</div><svg style="position:absolute;left:1847px;top:134px;" width="12" height="7" viewBox="0 0 12 7"><path d="M0.5 0.5 L11.5 0.5 L6 6.5 Z" fill="#000"/></svg><svg style="position:absolute;left:1874px;top:131px;" width="11" height="13" viewBox="0 0 11 13"><rect x="2.5" y="0.5" width="6" height="1.6" fill="#000"/><rect x="3" y="1" width="2" height="6" fill="#000"/><rect x="6" y="1" width="2.2" height="6" fill="#000"/><rect x="1" y="7" width="9" height="1.8" fill="#000"/><rect x="4.6" y="8.5" width="1.6" height="4" fill="#000"/></svg><svg style="position:absolute;left:1898px;top:131px;" width="12" height="12" viewBox="0 0 12 12"><path d="M1.5 1.5 L10.5 10.5 M10.5 1.5 L1.5 10.5" stroke="#000" stroke-width="2.2" stroke-linecap="round"/></svg><div style="left:1671px;top:1002px;width:247px;height:21px;background:#f4f4f4;border-top:1px solid #fff"></div><div style="left:1694px;top:1011px;width:180px;height:3px;background:#8c8c8c;border-radius:1px"></div><svg style="position:absolute;left:1680px;top:159px;" width="11" height="11" viewBox="0 0 11 11"><rect x=".5" y=".5" width="10" height="10" fill="#f6f8f8" stroke="#b8d8dc"/><path d="M2.5 5.5 H8.5" stroke="#000" stroke-width="1.3"/><path d="M5.5 2.5 V8.5" stroke="#000" stroke-width="1.3"/></svg><div class="t" style="left:1700px;top:156.952px;font-size:14px;font-weight:bold;color:#111;letter-spacing:.3px">General</div><svg style="position:absolute;left:1680px;top:182px;" width="11" height="11" viewBox="0 0 11 11"><rect x=".5" y=".5" width="10" height="10" fill="#f6f8f8" stroke="#b8d8dc"/><path d="M2.5 5.5 H8.5" stroke="#000" stroke-width="1.3"/><path d="M5.5 2.5 V8.5" stroke="#000" stroke-width="1.3"/></svg><div class="t" style="left:1700px;top:180.682px;font-size:14px;font-weight:bold;color:#111;letter-spacing:.3px">Boolean Operators</div><svg style="position:absolute;left:1680px;top:206px;" width="11" height="11" viewBox="0 0 11 11"><rect x=".5" y=".5" width="10" height="10" fill="#f6f8f8" stroke="#b8d8dc"/><path d="M2.5 5.5 H8.5" stroke="#000" stroke-width="1.3"/><path d="M5.5 2.5 V8.5" stroke="#000" stroke-width="1.3"/></svg><div class="t" style="left:1700px;top:204.412px;font-size:14px;font-weight:bold;color:#111;letter-spacing:.3px">Math Operators</div><svg style="position:absolute;left:1680px;top:230px;" width="11" height="11" viewBox="0 0 11 11"><rect x=".5" y=".5" width="10" height="10" fill="#f6f8f8" stroke="#b8d8dc"/><path d="M2.5 5.5 H8.5" stroke="#000" stroke-width="1.3"/></svg><div class="t" style="left:1700px;top:228.142px;font-size:14px;font-weight:bold;color:#111;letter-spacing:.3px">Other Operators</div><svg style="position:absolute;left:1722px;top:251px;" width="20" height="16" viewBox="0 0 20 16"><path d="M0 4 H4 M0 7 H4 M0 10 H4 M15 4 H20" stroke="#1a1aff" stroke-width="1.1"/><rect x="4" y="1.5" width="11" height="13" fill="#8090f0" stroke="#1a1aff" stroke-width="1.5"/><text x="6" y="8" font-size="6" fill="#111" font-family="Liberation Sans" font-weight="bold">01</text></svg><div class="t" style="left:1750px;top:252.354px;font-size:13px;color:#222;letter-spacing:.45px">SEL</div><svg style="position:absolute;left:1722px;top:274px;" width="20" height="16" viewBox="0 0 20 16"><path d="M0 4 H4 M0 7 H4 M0 10 H4 M15 4 H20" stroke="#1a1aff" stroke-width="1.1"/><rect x="4" y="1.5" width="11" height="13" fill="#8090f0" stroke="#1a1aff" stroke-width="1.5"/><text x="6" y="8" font-size="6" fill="#111" font-family="Liberation Sans">K</text></svg><div class="t" style="left:1750px;top:276.084px;font-size:13px;color:#222;letter-spacing:.45px">MUX</div><svg style="position:absolute;left:1722px;top:298px;" width="20" height="16" viewBox="0 0 20 16"><path d="M0 4 H4 M0 7 H4 M0 10 H4 M15 4 H20" stroke="#1a1aff" stroke-width="1.1"/><rect x="4" y="1.5" width="11" height="13" fill="#8090f0" stroke="#1a1aff" stroke-width="1.5"/><path d="M5 12 L14 4" stroke="#111" stroke-width="1.1"/></svg><div class="t" style="left:1750px;top:299.81399999999996px;font-size:13px;color:#222;letter-spacing:.45px">LIMIT</div><svg style="position:absolute;left:1722px;top:322px;" width="20" height="16" viewBox="0 0 20 16"><path d="M0 4 H4 M15 4 H20" stroke="#1a1aff" stroke-width="1.1"/><rect x="4" y="1.5" width="11" height="13" fill="#8090f0" stroke="#1a1aff" stroke-width="1.5"/><path d="M7.5 7 H11.5 M7.5 9.5 H11.5" stroke="#111"/></svg><div class="t" style="left:1750px;top:323.544px;font-size:13px;color:#222;letter-spacing:.45px">MOVE</div><div style="left:1722px;top:342px;width:197px;height:24px;border:1px solid #b0b0b0;border-right:none"></div><svg style="position:absolute;left:1722px;top:346px;" width="20" height="16" viewBox="0 0 20 16"><path d="M0 4 H4 M15 4 H20" stroke="#1a1aff" stroke-width="1.1"/><rect x="4" y="1.5" width="11" height="13" fill="#8090f0" stroke="#1a1aff" stroke-width="1.5"/><path d="M6.5 8.5 H12 M10 6.5 L12 8.5 L10 10.5" stroke="#111" fill="none"/></svg><div class="t" style="left:1750px;top:347.27399999999994px;font-size:13px;color:#222;letter-spacing:.45px">Conversion</div><svg style="position:absolute;left:1680px;top:372px;" width="11" height="11" viewBox="0 0 11 11"><rect x=".5" y=".5" width="10" height="10" fill="#f6f8f8" stroke="#b8d8dc"/><path d="M2.5 5.5 H8.5" stroke="#000" stroke-width="1.3"/><path d="M5.5 2.5 V8.5" stroke="#000" stroke-width="1.3"/></svg><div class="t" style="left:1700px;top:370.522px;font-size:14px;font-weight:bold;color:#111;letter-spacing:.3px">Function Blocks</div><svg style="position:absolute;left:1680px;top:396px;" width="11" height="11" viewBox="0 0 11 11"><rect x=".5" y=".5" width="10" height="10" fill="#f6f8f8" stroke="#b8d8dc"/><path d="M2.5 5.5 H8.5" stroke="#000" stroke-width="1.3"/></svg><div class="t" style="left:1700px;top:394.252px;font-size:14px;font-weight:bold;color:#111;letter-spacing:.3px">Ladder Elements</div><svg style="position:absolute;left:1722px;top:417px;" width="20" height="16" viewBox="0 0 20 16"><path d="M1 1 H19 M1 1 V16 M5 4 V16 M1 16 H19" stroke="#1a1aff" stroke-width="1.2" fill="none"/><circle cx="8" cy="5" r="3" fill="#ff3"/><path d="M12 5 H19 M12 8 H19" stroke="#6a6aff" stroke-dasharray="1 1"/></svg><div class="t" style="left:1750px;top:418.464px;font-size:13px;color:#222;letter-spacing:.45px">Network</div><svg style="position:absolute;left:1722px;top:440px;" width="20" height="16" viewBox="0 0 20 16"><path d="M1 8 H5 M14 8 H18" stroke="#1a1aff" stroke-width="1.2"/><rect x="5" y="4" width="2.5" height="8" fill="#1a1aff"/><rect x="11.5" y="4" width="2.5" height="8" fill="#1a1aff"/></svg><div class="t" style="left:1750px;top:442.19399999999996px;font-size:13px;color:#222;letter-spacing:.45px">Contact</div><svg style="position:absolute;left:1722px;top:464px;" width="20" height="16" viewBox="0 0 20 16"><path d="M1 8 H5 M14 8 H18" stroke="#1a1aff" stroke-width="1.2"/><rect x="5" y="4" width="2.5" height="8" fill="#1a1aff"/><rect x="11.5" y="4" width="2.5" height="8" fill="#1a1aff"/><path d="M8 12 L11 4" stroke="#222" stroke-width="1.1"/></svg><div class="t" style="left:1750px;top:465.924px;font-size:13px;color:#222;letter-spacing:.45px">Negated contact</div><svg style="position:absolute;left:1722px;top:488px;" width="20" height="16" viewBox="0 0 20 16"><path d="M1 1 V12 H5 M18 1 V12 H14" stroke="#1a1aff" stroke-width="1.1" fill="none"/><rect x="5" y="4" width="2.5" height="8" fill="#1a1aff"/><rect x="11.5" y="4" width="2.5" height="8" fill="#1a1aff"/></svg><div class="t" style="left:1750px;top:489.654px;font-size:13px;color:#222;letter-spacing:.45px">Parallel contact</div><svg style="position:absolute;left:1722px;top:512px;" width="20" height="16" viewBox="0 0 20 16"><path d="M1 1 V12 H5 M18 1 V12 H14" stroke="#1a1aff" stroke-width="1.1" fill="none"/><rect x="5" y="4" width="2.5" height="8" fill="#1a1aff"/><rect x="11.5" y="4" width="2.5" height="8" fill="#1a1aff"/><path d="M8 12 L11 4" stroke="#222" stroke-width="1.1"/></svg><div class="t" style="left:1750px;top:513.384px;font-size:13px;color:#222;letter-spacing:.45px">Parallel negated contact</div><svg style="position:absolute;left:1722px;top:535px;" width="20" height="16" viewBox="0 0 20 16"><path d="M1 8 H4 M15 8 H19" stroke="#1a1aff" stroke-width="1.2"/><path d="M7 3 Q3 8 7 13 M12 3 Q16 8 12 13" stroke="#1a1aff" stroke-width="2.2" fill="none"/></svg><div class="t" style="left:1750px;top:537.114px;font-size:13px;color:#222;letter-spacing:.45px">Coil</div><svg style="position:absolute;left:1722px;top:559px;" width="20" height="16" viewBox="0 0 20 16"><path d="M1 8 H4 M15 8 H19" stroke="#1a1aff" stroke-width="1.2"/><path d="M7 3 Q3 8 7 13 M12 3 Q16 8 12 13" stroke="#1a1aff" stroke-width="2.2" fill="none"/><text x="7" y="12" font-size="8" fill="#111" font-family="Liberation Sans" font-weight="bold">S</text></svg><div class="t" style="left:1750px;top:560.844px;font-size:13px;color:#222;letter-spacing:.45px">Set coil</div><svg style="position:absolute;left:1722px;top:583px;" width="20" height="16" viewBox="0 0 20 16"><path d="M1 8 H4 M15 8 H19" stroke="#1a1aff" stroke-width="1.2"/><path d="M7 3 Q3 8 7 13 M12 3 Q16 8 12 13" stroke="#1a1aff" stroke-width="2.2" fill="none"/><text x="7" y="12" font-size="8" fill="#111" font-family="Liberation Sans" font-weight="bold">R</text></svg><div class="t" style="left:1750px;top:584.574px;font-size:13px;color:#222;letter-spacing:.45px">Reset coil</div><svg style="position:absolute;left:1722px;top:607px;" width="20" height="16" viewBox="0 0 20 16"><path d="M0 4 H4 M0 12 H4 M15 4 H20 M15 12 H20" stroke="#1a1aff" stroke-width="1.1"/><rect x="4" y="1.5" width="11" height="13" fill="#8090f0" stroke="#1a1aff" stroke-width="1.5"/><circle cx="9.5" cy="8" r="4" fill="#555" stroke="#111"/><path d="M9.5 8 L11 6" stroke="#e33"/></svg><div class="t" style="left:1750px;top:608.304px;font-size:13px;color:#222;letter-spacing:.45px">TON</div><svg style="position:absolute;left:1722px;top:630px;" width="20" height="16" viewBox="0 0 20 16"><path d="M0 4 H4 M0 12 H4 M15 4 H20 M15 12 H20" stroke="#1a1aff" stroke-width="1.1"/><rect x="4" y="1.5" width="11" height="13" fill="#8090f0" stroke="#1a1aff" stroke-width="1.5"/><circle cx="9.5" cy="8" r="4" fill="#555" stroke="#111"/><path d="M9.5 8 L11 6" stroke="#e33"/></svg><div class="t" style="left:1750px;top:632.034px;font-size:13px;color:#222;letter-spacing:.45px">TOF</div><svg style="position:absolute;left:1722px;top:654px;" width="20" height="16" viewBox="0 0 20 16"><path d="M0 4 H4 M0 7 H4 M0 10 H4 M15 4 H20" stroke="#1a1aff" stroke-width="1.1"/><rect x="4" y="1.5" width="11" height="13" fill="#8090f0" stroke="#1a1aff" stroke-width="1.5"/><text x="5.5" y="11" font-size="7" fill="#111" font-family="Liberation Sans" font-weight="bold">+1</text></svg><div class="t" style="left:1750px;top:655.764px;font-size:13px;color:#222;letter-spacing:.45px">CTU</div><svg style="position:absolute;left:1722px;top:678px;" width="20" height="16" viewBox="0 0 20 16"><path d="M0 4 H4 M0 7 H4 M0 10 H4 M15 4 H20" stroke="#1a1aff" stroke-width="1.1"/><rect x="4" y="1.5" width="11" height="13" fill="#8090f0" stroke="#1a1aff" stroke-width="1.5"/><text x="6" y="11" font-size="7" fill="#111" font-family="Liberation Sans" font-weight="bold">-1</text></svg><div class="t" style="left:1750px;top:679.494px;font-size:13px;color:#222;letter-spacing:.45px">CTD</div><svg style="position:absolute;left:1722px;top:701px;" width="20" height="16" viewBox="0 0 20 16"><path d="M0 4 H4 M15 4 H20" stroke="#1a1aff" stroke-width="1.1"/><rect x="4" y="1.5" width="11" height="13" fill="#8090f0" stroke="#1a1aff" stroke-width="1.5"/><path d="M7.5 7 H11.5 M7.5 9.5 H11.5" stroke="#111"/></svg><div class="t" style="left:1750px;top:703.224px;font-size:13px;color:#222;letter-spacing:.45px">MOVE</div><svg style="position:absolute;left:1722px;top:725px;" width="20" height="16" viewBox="0 0 20 16"><path d="M1 8 H13" stroke="#1a1aff" stroke-width="1.2"/><path d="M8 3.5 L13 8 L8 12.5 Z" fill="none" stroke="#1a1aff" stroke-width="1.3"/></svg><div class="t" style="left:1750px;top:726.9540000000001px;font-size:13px;color:#222;letter-spacing:.45px">Jump</div><svg style="position:absolute;left:1722px;top:749px;" width="20" height="16" viewBox="0 0 20 16"><path d="M0 8 L5 4 V12 Z" fill="#1a1aff"/><text x="5" y="11.5" font-size="7" font-weight="bold" fill="#222" font-family="Liberation Sans">RET</text></svg><div class="t" style="left:1750px;top:750.6840000000001px;font-size:13px;color:#222;letter-spacing:.45px">Return</div><svg style="position:absolute;left:1722px;top:773px;" width="20" height="16" viewBox="0 0 20 16"><path d="M1 3 H18 M8 3 V14 H18" stroke="#1a1aff" stroke-width="1.3" fill="none"/><circle cx="8" cy="3" r="1.8" fill="#1a1aff"/></svg><div class="t" style="left:1750px;top:774.4140000000001px;font-size:13px;color:#222;letter-spacing:.45px">Branch</div><svg style="position:absolute;left:1722px;top:796px;" width="20" height="16" viewBox="0 0 20 16"><path d="M1 8 H19" stroke="#1a1aff" stroke-width="1" stroke-dasharray="2 1"/><circle cx="10" cy="7" r="3" fill="#ff7777"/><path d="M10 9 V15 M8 13 L10 15 L12 13" stroke="#1a1aff" fill="none"/></svg><div class="t" style="left:1750px;top:798.1440000000001px;font-size:13px;color:#222;letter-spacing:.45px">Branch Start/End</div><svg style="position:absolute;left:1680px;top:823px;" width="11" height="11" viewBox="0 0 11 11"><rect x=".5" y=".5" width="10" height="10" fill="#f6f8f8" stroke="#b8d8dc"/><path d="M2.5 5.5 H8.5" stroke="#000" stroke-width="1.3"/><path d="M5.5 2.5 V8.5" stroke="#000" stroke-width="1.3"/></svg><div class="t" style="left:1700px;top:821.392px;font-size:14px;font-weight:bold;color:#111;letter-spacing:.3px">POUs</div><div style="left:0px;top:1025px;width:1919px;height:28px;background:#f7f7f7"></div><svg style="position:absolute;left:2px;top:1026px;" width="390" height="28" viewBox="0 0 390 28"><path d="M0.5 28 V4 Q0.5 0.5 4 0.5 H385 Q388.5 0.5 388.5 4 V28" fill="#f2f2f2" stroke="#b0b0b0"/></svg><svg style="position:absolute;left:8px;top:1032px;" width="16" height="16" viewBox="0 0 16 16"><rect x="1" y="1" width="13" height="14" fill="#fff" stroke="#111" stroke-width="1.3"/><rect x="1" y="1" width="13" height="2.5" fill="#1a1aa0"/><path d="M3.5 6.5 H11.5 M3.5 9 H11.5 M3.5 11.5 H11.5" stroke="#555"/></svg><div class="t" style="left:34px;top:1032.5px;font-size:14.4px;color:#6a6a6a">Messages - Total 0 error(s), 0 warning(s), 0 message(s)</div><div style="left:0px;top:1053px;width:1919px;height:26px;background:#f0f0f0;border-top:1px solid #e4e4e4"></div><div style="left:1210px;top:1056px;width:1px;height:23px;background:#d8d8d8"></div><div style="left:1538px;top:1056px;width:1px;height:23px;background:#d8d8d8"></div><div style="left:1568px;top:1056px;width:1px;height:23px;background:#d8d8d8"></div><div style="left:1868px;top:1056px;width:1px;height:23px;background:#d8d8d8"></div><div style="left:1900px;top:1056px;width:1px;height:23px;background:#d8d8d8"></div><div class="t" style="left:1251px;top:1060px;font-size:13.3px;color:#222">Last build:</div><svg style="position:absolute;left:1320px;top:1059px;" width="16" height="16" viewBox="0 0 16 16"><circle cx="8" cy="8" r="6.8" fill="#e01818" stroke="#a00" stroke-width=".8"/><path d="M5.3 5.3 L10.7 10.7 M10.7 5.3 L5.3 10.7" stroke="#fff" stroke-width="2"/></svg><div class="t" style="left:1342px;top:1061px;font-size:13.7px;color:#222">0</div><svg style="position:absolute;left:1357px;top:1059px;" width="16" height="16" viewBox="0 0 16 16"><circle cx="8" cy="8" r="6.8" fill="#f4ee20" stroke="#555" stroke-width=".9"/><circle cx="8" cy="6" r="2" fill="#111"/><path d="M8 7 V12" stroke="#111" stroke-width="1.3"/></svg><div class="t" style="left:1378px;top:1061px;font-size:13.7px;color:#222">0</div><div class="t" style="left:1414px;top:1060px;font-size:12.8px;color:#222">Precompile</div><svg style="position:absolute;left:1484px;top:1058px;" width="20" height="18" viewBox="0 0 20 18"><path d="M2 10 L7 16 L18 3" stroke="#1a9a2a" stroke-width="3" fill="none"/></svg><svg style="position:absolute;left:1544px;top:1057px;" width="22" height="22" viewBox="0 0 22 22"><g transform="translate(8 9)"><circle r="6" fill="#8a90c8"/><circle r="2.5" fill="#f0f0f0"/></g><circle cx="16" cy="5" r="3" fill="#11cc33"/><rect x="10" y="12" width="10" height="9" fill="#fff" stroke="#111"/><path d="M10 16.5 H20 M15 12 V21" stroke="#111"/></svg><div class="t" style="left:1649px;top:1060px;font-size:14.6px;color:#222">Project user: (nobody)</div><svg style="position:absolute;left:1874px;top:1057px;" width="18" height="20" viewBox="0 0 18 20"><path d="M9 1 L17 4 V10 Q17 16 9 19 Q1 16 1 10 V4 Z" fill="#d8d060" stroke="#555"/><path d="M9 1 V19 M1 10 H17" stroke="#888" stroke-width=".8"/><path d="M1 4 L9 1 V10 H1 Z" fill="#bbb"/><path d="M9 10 H17 Q17 16 9 19 Z" fill="#bbb"/></svg><svg style="position:absolute;left:3px;top:64px;" width="20" height="20" viewBox="0 0 20 20"><path d="M6 3.5 H15 L18 6 V19 H6 Z" fill="#fff" stroke="#333" stroke-width="1.3"/><path d="M8.5 9.5 H15.5 M8.5 11.5 H15.5 M8.5 14.5 H15.5" stroke="#888" stroke-width="1.1"/><path d="M1 1 L7 7 M4 0 V8 M0 4.5 H8 M1 7 L7 1" stroke="#ee3" stroke-width="1.1"/></svg><svg style="position:absolute;left:32px;top:64px;" width="20" height="20" viewBox="0 0 20 20"><path d="M1 6 H7 L8 5 H13 V8" fill="#ff6" stroke="#333"/><path d="M1 6 V17 H15 L19 9 H5 L1 17" fill="#a0a030" stroke="#333"/><path d="M1 6 L1 16 L5 9 H12 L12 7 H7 L6 6 Z" fill="#ff8"/><path d="M11 4 Q14 0 18 4" stroke="#222" fill="none" stroke-width="1.2"/><path d="M18.5 5 L16 5 L18 2.5 Z" fill="#222"/></svg><svg style="position:absolute;left:62px;top:64px;" width="20" height="20" viewBox="0 0 20 20"><rect x="1.5" y="1.5" width="17" height="17" fill="#a09830" stroke="#444" stroke-width="1.2"/><rect x="4" y="2" width="11" height="7" fill="#d8d8d8"/><rect x="4" y="12" width="11" height="6" fill="#444"/><rect x="11" y="13" width="2" height="3" fill="#ddd"/></svg><div style="left:90px;top:65px;width:1px;height:19px;background:#c9c9c9"></div><svg style="position:absolute;left:97px;top:64px;" width="20" height="20" viewBox="0 0 20 20"><path d="M5 2 H14 L16 6 H4 Z" fill="#fff" stroke="#444"/><rect x="1" y="6" width="18" height="9" rx="2" fill="#c8c8c8" stroke="#444" stroke-width="1.2"/><rect x="3" y="15" width="14" height="3" fill="#999" stroke="#444"/><path d="M9 12 H13" stroke="#ee3" stroke-width="1.5"/><path d="M4 9 H16" stroke="#777"/></svg><div style="left:127px;top:65px;width:1px;height:19px;background:#c9c9c9"></div><svg style="position:absolute;left:135px;top:64px;" width="20" height="20" viewBox="0 0 20 20"><path d="M5 7 Q9 3 13 5 Q17 8 14 13" stroke="#9c9c9c" stroke-width="1.8" fill="none"/><path d="M2 11 L3 4 L8 9 Z" fill="#9c9c9c"/></svg><svg style="position:absolute;left:162px;top:64px;" width="20" height="20" viewBox="0 0 20 20"><path d="M15 7 Q11 3 7 5 Q3 8 6 13" stroke="#9c9c9c" stroke-width="1.8" fill="none" transform="translate(0 0)"/><path d="M18 11 L17 4 L12 9 Z" fill="#9c9c9c"/></svg><svg style="position:absolute;left:191px;top:64px;" width="20" height="20" viewBox="0 0 20 20"><path d="M7 1 L10 10 L8 14 M13 1 L10 10 L12 14" stroke="#9c9c9c" stroke-width="1.3" fill="none"/><circle cx="6.5" cy="16" r="2.5" fill="none" stroke="#9c9c9c" stroke-width="1.3"/><circle cx="13.5" cy="16" r="2.5" fill="none" stroke="#9c9c9c" stroke-width="1.3"/></svg><svg style="position:absolute;left:219px;top:64px;" width="20" height="20" viewBox="0 0 20 20"><path d="M1 1.5 H8 L10 3 V13 H1 Z" fill="#eee" stroke="#9c9c9c" stroke-width="1.2"/><path d="M8 6.5 H15 L18 9 V18 H8 Z" fill="#eee" stroke="#9c9c9c" stroke-width="1.2"/><path d="M3 5.5 H7 M3 8.5 H7 M10 11.5 H16 M10 14.5 H16" stroke="#9c9c9c"/></svg><svg style="position:absolute;left:249px;top:64px;" width="20" height="20" viewBox="0 0 20 20"><rect x="1" y="3" width="16" height="15" rx="2" fill="#b8b8b8" stroke="#9c9c9c"/><rect x="5" y="1" width="8" height="4" fill="#ddd" stroke="#9c9c9c"/><rect x="9" y="11" width="10" height="8" fill="#e8e8e8" stroke="#9c9c9c" stroke-width="1.2"/><path d="M11 14 H17 M11 16.5 H17" stroke="#9c9c9c"/></svg><svg style="position:absolute;left:277px;top:64px;" width="20" height="20" viewBox="0 0 20 20"><path d="M2 2 L17 17 M17 2 L2 17" stroke="#9c9c9c" stroke-width="2"/></svg><div style="left:307px;top:65px;width:1px;height:19px;background:#c9c9c9"></div><svg style="position:absolute;left:313px;top:64px;" width="20" height="20" viewBox="0 0 20 20"><path d="M4 2 H7 V7 H9 V2 H12 V7" fill="none"/><rect x="3" y="1" width="4" height="4" fill="#333"/><rect x="12" y="1" width="4" height="4" fill="#333"/><path d="M1 17 L2 6 H8 V10 H11 V6 H17 L19 17 H11 V13 H8 V17 Z" fill="#333"/><rect x="3" y="8" width="2" height="4" fill="#ccc"/><rect x="14" y="8" width="2" height="4" fill="#ccc"/></svg><svg style="position:absolute;left:342px;top:64px;" width="20" height="20" viewBox="0 0 20 20"><text x="0" y="8" font-size="8" fill="#555" font-family="Liberation Sans">A</text><text x="12" y="19" font-size="8" fill="#999" font-family="Liberation Sans">B</text><path d="M3 10 Q3 17 10 17 M10 2 Q14 2 14 10" stroke="#333" stroke-dasharray="1 1.3" fill="none"/><path d="M14 1 L18 1 L18 5 Z M8 15 L11 17 L8 19 Z" fill="#333"/></svg><svg style="position:absolute;left:371px;top:64px;" width="20" height="20" viewBox="0 0 20 20"><path d="M4 2 H7 V7 H9 V2 H12 V7" fill="none"/><rect x="3" y="1" width="4" height="4" fill="#3a3a3a"/><rect x="12" y="1" width="4" height="4" fill="#3a3a3a"/><path d="M1 17 L2 6 H8 V10 H11 V6 H17 L19 17 H11 V13 H8 V17 Z" fill="#3a3a3a"/><rect x="3" y="8" width="2" height="4" fill="#ccc"/><rect x="14" y="8" width="2" height="4" fill="#ccc"/><rect x="8" y="11" width="11" height="8" fill="#f2b830" stroke="#8a6010" stroke-width=".8"/></svg><svg style="position:absolute;left:400px;top:64px;" width="20" height="20" viewBox="0 0 20 20"><text x="0" y="8" font-size="8" fill="#555" font-family="Liberation Sans">A</text><path d="M3 10 Q3 17 8 17 M10 2 Q14 2 14 9" stroke="#333" stroke-dasharray="1 1.3" fill="none"/><path d="M14 1 L18 1 L18 5 Z" fill="#333"/><rect x="8" y="11" width="11" height="8" fill="#f2b830" stroke="#8a6010" stroke-width=".8"/></svg><div style="left:429px;top:65px;width:1px;height:19px;background:#c9c9c9"></div><svg style="position:absolute;left:440px;top:64px;" width="20" height="20" viewBox="0 0 20 20"><path d="M1 1 H11 V18 L6 13 L1 18 Z" fill="#a8a8a8"/></svg><svg style="position:absolute;left:465px;top:64px;" width="20" height="20" viewBox="0 0 20 20"><path d="M5 3 H15 V18 L10 13 L5 18 Z" fill="#a8a8a8"/><path d="M1 6 H8 M4 3 L1 6 L4 9" stroke="#a0a0a0" stroke-width="2" fill="none"/></svg><svg style="position:absolute;left:493px;top:64px;" width="20" height="20" viewBox="0 0 20 20"><path d="M5 3 H15 V18 L10 13 L5 18 Z" fill="#a8a8a8"/><path d="M0 5 H8 M5 2 L8 5 L5 8" stroke="#a0a0a0" stroke-width="2" fill="none"/></svg><svg style="position:absolute;left:522px;top:64px;" width="20" height="20" viewBox="0 0 20 20"><path d="M5 3 H15 V18 L10 13 L5 18 Z" fill="#a8a8a8"/><path d="M0 1 L9 10 M9 1 L0 10" stroke="#a0a0a0" stroke-width="2"/></svg><div style="left:552px;top:65px;width:1px;height:19px;background:#c9c9c9"></div><svg style="position:absolute;left:559px;top:64px;" width="20" height="20" viewBox="0 0 20 20"><rect x="1" y="1" width="15" height="13" fill="#fff" stroke="#444" stroke-width="1.2"/><path d="M1 4.5 H16 M3 7.5 H13 M3 10.5 H13" stroke="#888"/><rect x="6" y="9" width="14" height="10" fill="#fff" stroke="#444" stroke-width="1.2"/><path d="M9 13.5 H18 M9 16.5 H18" stroke="#3340dd" stroke-width="1.4"/></svg><div style="left:588px;top:65px;width:1px;height:19px;background:#c9c9c9"></div><svg style="position:absolute;left:595px;top:64px;" width="20" height="20" viewBox="0 0 20 20"><path d="M2 4 H10 L13 7 V19 H2 Z" fill="#fff" stroke="#444" stroke-width="1.2"/><path d="M11 4 Q14 0 18 3" stroke="#333" fill="none" stroke-width="1.2"/><path d="M19 5 L15 4.5 L18 1.5 Z" fill="#333"/></svg><div style="left:624px;top:65px;width:1px;height:19px;background:#c9c9c9"></div><svg style="position:absolute;left:631px;top:64px;" width="20" height="20" viewBox="0 0 20 20"><rect x="1" y="6" width="18" height="13" fill="#fff" stroke="#333" stroke-width="1.2"/><path d="M1 12 H19 M1 15 H19" stroke="#999" stroke-dasharray="1 1"/><path d="M2 2 H18" stroke="#66a" stroke-dasharray="1 1"/><path d="M6 3 V10 M3 7 L6 10 L9 7 M14 3 V10 M11 7 L14 10 L17 7" stroke="#1535d0" stroke-width="1.4" fill="none"/></svg><div style="left:660px;top:65px;width:1px;height:19px;background:#c9c9c9"></div><svg style="position:absolute;left:668px;top:64px;" width="20" height="20" viewBox="0 0 20 20"><g transform="translate(8 8)"><circle r="6.5" fill="#8890cc"/><circle r="3" fill="#fafafa"/><rect x="-1.7" y="-8.5" width="3.4" height="3.5" fill="#8890cc" transform="rotate(0)"/><rect x="-1.7" y="-8.5" width="3.4" height="3.5" fill="#8890cc" transform="rotate(45)"/><rect x="-1.7" y="-8.5" width="3.4" height="3.5" fill="#8890cc" transform="rotate(90)"/><rect x="-1.7" y="-8.5" width="3.4" height="3.5" fill="#8890cc" transform="rotate(135)"/><rect x="-1.7" y="-8.5" width="3.4" height="3.5" fill="#8890cc" transform="rotate(180)"/><rect x="-1.7" y="-8.5" width="3.4" height="3.5" fill="#8890cc" transform="rotate(225)"/><rect x="-1.7" y="-8.5" width="3.4" height="3.5" fill="#8890cc" transform="rotate(270)"/><rect x="-1.7" y="-8.5" width="3.4" height="3.5" fill="#8890cc" transform="rotate(315)"/></g><circle cx="16.5" cy="4" r="3" fill="#11cc22"/><rect x="12" y="10" width="6" height="5" fill="#fff" stroke="#333"/><path d="M10 19 L14 15 M12 15 H14 V17" stroke="#333" fill="none"/></svg><svg style="position:absolute;left:696px;top:64px;" width="20" height="20" viewBox="0 0 20 20"><g transform="translate(8 9)"><circle r="6.5" fill="#b8b8b8"/><circle r="3" fill="#f0f0f0"/><rect x="-1.7" y="-8.5" width="3.4" height="3.5" fill="#b8b8b8" transform="rotate(0)"/><rect x="-1.7" y="-8.5" width="3.4" height="3.5" fill="#b8b8b8" transform="rotate(45)"/><rect x="-1.7" y="-8.5" width="3.4" height="3.5" fill="#b8b8b8" transform="rotate(90)"/><rect x="-1.7" y="-8.5" width="3.4" height="3.5" fill="#b8b8b8" transform="rotate(135)"/><rect x="-1.7" y="-8.5" width="3.4" height="3.5" fill="#b8b8b8" transform="rotate(180)"/><rect x="-1.7" y="-8.5" width="3.4" height="3.5" fill="#b8b8b8" transform="rotate(225)"/><rect x="-1.7" y="-8.5" width="3.4" height="3.5" fill="#b8b8b8" transform="rotate(270)"/><rect x="-1.7" y="-8.5" width="3.4" height="3.5" fill="#b8b8b8" transform="rotate(315)"/></g><path d="M13 1 L19 7 M19 1 L13 7" stroke="#aaa" stroke-width="1.2"/><rect x="13" y="9" width="5" height="6" fill="#ddd" stroke="#aaa"/></svg><svg style="position:absolute;left:737px;top:64px;" width="20" height="20" viewBox="0 0 20 20"><path d="M1 4 L7 10 L1 16 Z" fill="#a0a0a0"/></svg><svg style="position:absolute;left:762px;top:64px;" width="20" height="20" viewBox="0 0 20 20"><rect x="1" y="6" width="11" height="11" fill="#a0a0a0"/></svg><div style="left:783px;top:65px;width:1px;height:19px;background:#c9c9c9"></div><svg style="position:absolute;left:790px;top:64px;" width="20" height="20" viewBox="0 0 20 20"><rect x="1" y="2" width="9" height="16" fill="#a8b8a0" stroke="#22ee22" stroke-width="1.3"/><rect x="10" y="4" width="8" height="14" fill="#999" stroke="#777"/><path d="M3 5 V15 M6 6 V14" stroke="#3c3" stroke-dasharray="1 1.5"/></svg><svg style="position:absolute;left:818px;top:64px;" width="20" height="20" viewBox="0 0 20 20"><circle cx="10" cy="10" r="8.3" fill="#fff" stroke="#a8a8a8" stroke-width="2"/><path d="M10 4 L11 12" stroke="#222" stroke-width="1.5"/></svg><div style="left:848px;top:65px;width:1px;height:19px;background:#c9c9c9"></div><svg style="position:absolute;left:854px;top:64px;" width="20" height="20" viewBox="0 0 20 20"><path d="M3 2.5 H1 V15 H4" stroke="#999" fill="none"/><path d="M4 13 L5 18 L7 14" stroke="#999" fill="none"/><path d="M9 4.5 H19 M11 7.5 H19 M11 10.5 H19 M11 13.5 H19 M9 16.5 H19" stroke="#a8a8a8" stroke-width="1.1"/></svg><svg style="position:absolute;left:883px;top:64px;" width="20" height="20" viewBox="0 0 20 20"><path d="M1 6 Q1 2 7 2 M1 6 L4 4 M1 6 L1 3" stroke="#999" fill="none" stroke-width="1.3"/><path d="M1 6.5 H6" stroke="#999" stroke-width="1.3"/><path d="M9 7.5 H19 M11 10.5 H19 M11 13.5 H19 M9 16.5 H19" stroke="#a8a8a8" stroke-width="1.1"/></svg><svg style="position:absolute;left:912px;top:64px;" width="20" height="20" viewBox="0 0 20 20"><path d="M1 8 H6 M1 8 V3 M1 3 L3 1" stroke="#999" fill="none" stroke-width="1.3"/><path d="M3 3 L1 1 L5 1" stroke="#999" fill="none"/><path d="M9 5 H19 M11 8 H19 M11 11 H19 M11 14 H19 M9 17 H19" stroke="#a8a8a8" stroke-width="1.1"/></svg><svg style="position:absolute;left:941px;top:64px;" width="20" height="20" viewBox="0 0 20 20"><path d="M1 6.5 H7 M4 3 L7 6 L4 9" stroke="#999" fill="none" stroke-width="1.3"/><path d="M9 4.5 H19 M11 7.5 H19 M11 10.5 H19 M11 13.5 H19 M9 16.5 H19" stroke="#a8a8a8" stroke-width="1.1"/></svg><svg style="position:absolute;left:968px;top:64px;" width="20" height="20" viewBox="0 0 20 20"><circle cx="8" cy="5" r="4" fill="none" stroke="#999" stroke-width="1.3"/><path d="M2 12 H9 V9 L14 14 L9 19 V16 H2 Z" fill="#ddd" stroke="#999"/></svg><div style="left:999px;top:65px;width:1px;height:19px;background:#c9c9c9"></div><svg style="position:absolute;left:1010px;top:64px;" width="20" height="20" viewBox="0 0 20 20"><path d="M1 7 H7 V3 L12 9 L7 15 V11 H1 Z" fill="#ddd" stroke="#999" stroke-width="1.2"/></svg><div style="left:1035px;top:65px;width:1px;height:19px;background:#c9c9c9"></div><svg style="position:absolute;left:1044px;top:64px;" width="20" height="20" viewBox="0 0 20 20"><path d="M13 1 H3 L6 4 L1 9 L4 12 L9 7 L12 10 Z" fill="#a0a0a0"/><path d="M7 13 L10 17 L18 8" stroke="#b4b4b4" stroke-width="2" fill="none"/></svg><svg style="position:absolute;left:4px;top:96px;" width="20" height="20" viewBox="0 0 20 20"><path d="M1 2 V19 H20 M5 7 V19 M1 2 H20" stroke="#a0a0a0" stroke-width="1.5" fill="none"/><circle cx="8" cy="5" r="3.5" fill="#ddd"/><path d="M12 6 H19 M12 9 H19" stroke="#aaa" stroke-dasharray="1.5 1"/></svg><svg style="position:absolute;left:33px;top:96px;" width="20" height="20" viewBox="0 0 20 20"><text x="0" y="14" font-size="12" fill="#b0b0b0" font-family="Liberation Serif" font-style="italic">{x x}</text></svg><div style="left:62px;top:96px;width:1px;height:19px;background:#c9c9c9"></div><svg style="position:absolute;left:68px;top:96px;" width="20" height="20" viewBox="0 0 20 20"><path d="M1 10.5 H5" stroke="#999" stroke-width="2.4"/><text x="6" y="13" font-size="8.3" font-weight="bold" fill="#a0a0a0" font-family="Liberation Mono">VAR</text></svg><svg style="position:absolute;left:98px;top:96px;" width="20" height="20" viewBox="0 0 20 20"><path d="M1 10 H4 M16 10 H19" stroke="#999" stroke-width="1.4"/><path d="M7 4 Q2 10 7 16 M13 4 Q18 10 13 16" stroke="#a0a0a0" stroke-width="2.8" fill="none"/></svg><svg style="position:absolute;left:127px;top:96px;" width="20" height="20" viewBox="0 0 20 20"><path d="M1 10 H4 M16 10 H19" stroke="#999" stroke-width="1.4"/><path d="M7 4 Q2 10 7 16 M13 4 Q18 10 13 16" stroke="#a0a0a0" stroke-width="2.8" fill="none"/><text x="7" y="14" font-size="9" font-weight="bold" fill="#999" font-family="Liberation Sans">S</text></svg><svg style="position:absolute;left:156px;top:96px;" width="20" height="20" viewBox="0 0 20 20"><path d="M1 10 H4 M16 10 H19" stroke="#999" stroke-width="1.4"/><path d="M7 4 Q2 10 7 16 M13 4 Q18 10 13 16" stroke="#a0a0a0" stroke-width="2.8" fill="none"/><text x="7" y="14" font-size="9" font-weight="bold" fill="#999" font-family="Liberation Sans">R</text></svg><svg style="position:absolute;left:184px;top:96px;" width="20" height="20" viewBox="0 0 20 20"><path d="M1 10 H5 M14 10 H18" stroke="#999" stroke-width="1.3"/><rect x="4.5" y="5" width="3" height="10" fill="#a4a4a4"/><rect x="11.5" y="5" width="3" height="10" fill="#a4a4a4"/></svg><svg style="position:absolute;left:213px;top:96px;" width="20" height="20" viewBox="0 0 20 20"><path d="M1 10 H5 M14 10 H18" stroke="#999" stroke-width="1.3"/><rect x="4.5" y="5" width="3" height="10" fill="#a4a4a4"/><rect x="11.5" y="5" width="3" height="10" fill="#a4a4a4"/><path d="M8 15 L11 5" stroke="#999" stroke-width="1.2"/></svg><svg style="position:absolute;left:242px;top:96px;" width="20" height="20" viewBox="0 0 20 20"><path d="M1 10 H5 M14 10 H18" stroke="#999" stroke-width="1.3"/><rect x="4.5" y="5" width="3" height="10" fill="#a4a4a4"/><rect x="11.5" y="5" width="3" height="10" fill="#a4a4a4"/><path d="M4 1.5 H13 M11 0 L14 1.5 L11 3" stroke="#999" stroke-width="1.3" fill="none"/></svg><svg style="position:absolute;left:270px;top:96px;" width="20" height="20" viewBox="0 0 20 20"><path d="M1 1 V13 H5 M18 1 V13 H14" stroke="#999" stroke-width="1.1" fill="none"/><rect x="4.5" y="5" width="3" height="10" fill="#a4a4a4"/><rect x="11.5" y="5" width="3" height="10" fill="#a4a4a4"/></svg><svg style="position:absolute;left:299px;top:96px;" width="20" height="20" viewBox="0 0 20 20"><path d="M1 1 V13 H5 M18 1 V13 H14" stroke="#999" stroke-width="1.1" fill="none"/><rect x="4.5" y="5" width="3" height="10" fill="#a4a4a4"/><rect x="11.5" y="5" width="3" height="10" fill="#a4a4a4"/><path d="M8 15 L11 5" stroke="#999" stroke-width="1.2"/></svg><svg style="position:absolute;left:328px;top:96px;" width="20" height="20" viewBox="0 0 20 20"><path d="M1 19 V9 H4 M12 7 H15 V15 H18" stroke="#999" stroke-width="1.1" fill="none"/><rect x="3.5" y="5" width="3" height="10" fill="#a4a4a4"/><rect x="11.5" y="5" width="3" height="10" fill="#a4a4a4"/></svg><svg style="position:absolute;left:356px;top:96px;" width="20" height="20" viewBox="0 0 20 20"><path d="M0 6 H4 M0 9 H4 M0 12 H4 M15 6 H19" stroke="#999" stroke-width="1.1"/><rect x="4" y="2" width="11" height="15" fill="#b4b4b4" stroke="#999"/></svg><svg style="position:absolute;left:385px;top:96px;" width="20" height="20" viewBox="0 0 20 20"><path d="M0 6 H4 M0 9 H4 M0 12 H4 M15 6 H19" stroke="#999" stroke-width="1.1"/><rect x="4" y="2" width="11" height="15" fill="#b4b4b4" stroke="#999"/><text x="7" y="14" font-size="10" fill="#ddd" font-family="Liberation Sans">?</text></svg><svg style="position:absolute;left:414px;top:96px;" width="20" height="20" viewBox="0 0 20 20"><path d="M0 6 H4 M0 9 H4 M0 12 H4 M15 6 H19" stroke="#999" stroke-width="1.1"/><rect x="4" y="2" width="11" height="15" fill="#b4b4b4" stroke="#999"/><text x="5.5" y="12" font-size="6" fill="#ddd" font-family="Liberation Sans" font-weight="bold">EN</text></svg><svg style="position:absolute;left:442px;top:96px;" width="20" height="20" viewBox="0 0 20 20"><path d="M0 6 H4 M0 9 H4 M0 12 H4 M15 6 H19" stroke="#999" stroke-width="1.1"/><rect x="4" y="2" width="11" height="15" fill="#b4b4b4" stroke="#999"/><text x="6" y="9" font-size="6" fill="#ddd" font-family="Liberation Sans">E</text><text x="9" y="15" font-size="7" fill="#ddd" font-family="Liberation Sans">?</text></svg><svg style="position:absolute;left:470px;top:96px;" width="20" height="20" viewBox="0 0 20 20"><path d="M1 10 H10" stroke="#999" stroke-width="1.4"/><path d="M9 4 L15 10 L9 16 Z" fill="none" stroke="#a0a0a0" stroke-width="1.6"/></svg><svg style="position:absolute;left:500px;top:96px;" width="20" height="20" viewBox="0 0 20 20"><path d="M1 4 H12 L16 8 L12 12 H1 Z" fill="#f4f4f4" stroke="#a0a0a0" stroke-width="1.2"/><text x="3" y="10.5" font-size="6" font-weight="bold" fill="#999" font-family="Liberation Sans">LBL</text></svg><svg style="position:absolute;left:528px;top:96px;" width="20" height="20" viewBox="0 0 20 20"><path d="M1 10 L6 5.5 V14.5 Z" fill="none" stroke="#999" stroke-width="1.3"/><text x="6.5" y="13.5" font-size="7.2" font-weight="bold" fill="#a0a0a0" font-family="Liberation Sans">RET</text></svg><svg style="position:absolute;left:558px;top:96px;" width="20" height="20" viewBox="0 0 20 20"><path d="M15 1 V19 M6 12 H15" stroke="#999" stroke-width="1.4"/><path d="M5 3 L9 7 M9 3 L5 7 M7 2 V8 M4 5 H10" stroke="#ccc" stroke-width="1.1"/></svg><div style="left:587px;top:96px;width:1px;height:19px;background:#c9c9c9"></div><svg style="position:absolute;left:596px;top:96px;" width="20" height="20" viewBox="0 0 20 20"><rect x="2" y="2" width="12" height="15" fill="#b0b0b0" stroke="#999"/><path d="M7 14 L9 5" stroke="#888"/></svg><svg style="position:absolute;left:625px;top:96px;" width="20" height="20" viewBox="0 0 20 20"><rect x="2" y="2" width="12" height="15" fill="#b0b0b0" stroke="#999"/><text x="4" y="9" font-size="5" fill="#eee" font-family="Liberation Sans">P</text><text x="7" y="14" font-size="5.5" fill="#eee" font-family="Liberation Sans">N</text></svg><svg style="position:absolute;left:651px;top:96px;" width="20" height="20" viewBox="0 0 20 20"><path d="M0 10 H4 M15 1 V19" stroke="#999" stroke-width="1.2"/><rect x="4" y="3" width="11" height="14" fill="#e8e8e8" stroke="#999" stroke-width="1.2"/><text x="6" y="14" font-size="10" font-weight="bold" fill="#aaa" font-family="Liberation Sans">S</text></svg><div style="left:681px;top:96px;width:1px;height:19px;background:#c9c9c9"></div><svg style="position:absolute;left:687px;top:96px;" width="20" height="20" viewBox="0 0 20 20"><rect x="1" y="2" width="4" height="15" fill="#b8b8b8" stroke="#999"/><path d="M5 6 H11 V4 H19 M5 14 H9" stroke="#999" stroke-width="1.3" fill="none"/></svg><svg style="position:absolute;left:717px;top:96px;" width="20" height="20" viewBox="0 0 20 20"><path d="M1 4 H17 M8 4 V14 H17" stroke="#999" stroke-width="1.4" fill="none"/><circle cx="8" cy="4" r="1.8" fill="#999"/></svg><svg style="position:absolute;left:745px;top:96px;" width="20" height="20" viewBox="0 0 20 20"><path d="M8 2 H19 M0 6 H8 M8 6 V16" stroke="#999" stroke-width="1.3" fill="none"/><circle cx="8" cy="6" r="1.8" fill="#999"/><path d="M15 4 V11 M12.5 9 L15 11.5 L17.5 9" stroke="#999" fill="none" stroke-width="1.2"/><circle cx="8" cy="16" r="3" fill="#ddd"/><path d="M11 14 H19" stroke="#aaa" stroke-dasharray="1.5 1"/></svg><svg style="position:absolute;left:774px;top:96px;" width="20" height="20" viewBox="0 0 20 20"><circle cx="7" cy="3.5" r="3" fill="#ddd"/><path d="M11 4 H19" stroke="#aaa" stroke-dasharray="1.5 1"/><path d="M0 10 H7 M7 10 V18 H19" stroke="#999" stroke-width="1.3" fill="none"/><circle cx="7" cy="10" r="1.8" fill="#999"/><path d="M14 17 V9 M11.5 11.5 L14 9 L16.5 11.5" stroke="#999" fill="none" stroke-width="1.2"/></svg><svg style="position:absolute;left:802px;top:96px;" width="20" height="20" viewBox="0 0 20 20"><path d="M1 6 H8" stroke="#aaa" stroke-dasharray="1.5 1"/><path d="M6 2 L10 8 M10 2 L6 8 M8 1 V9 M4 5 H12" stroke="#ccc"/><path d="M9 9 L17 17 M17 11 V17 H11" stroke="#999" stroke-width="1.4" fill="none"/></svg></body></html>
